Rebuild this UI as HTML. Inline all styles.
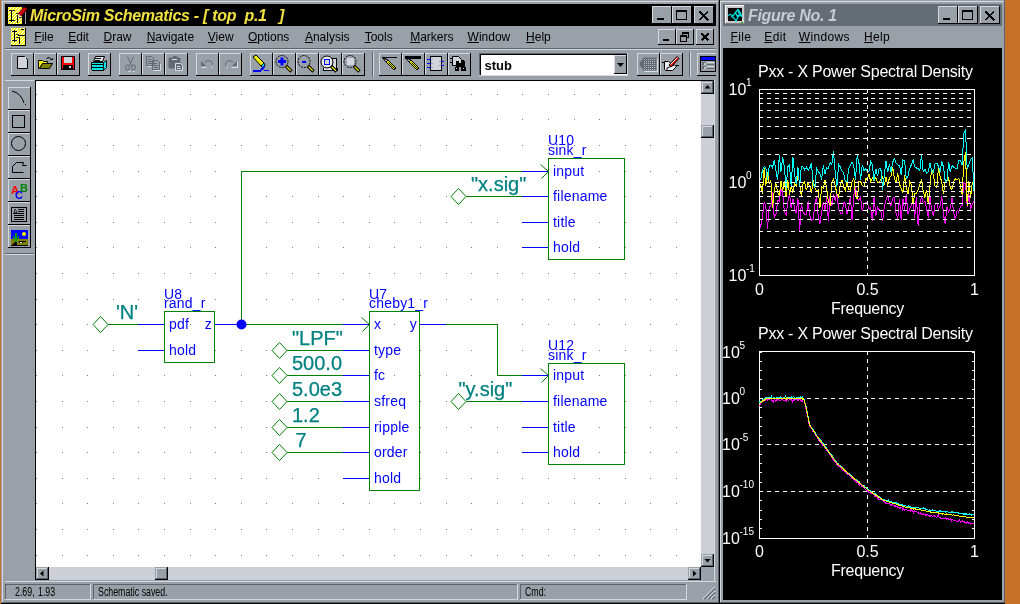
<!DOCTYPE html><html><head><meta charset="utf-8"><style>
html,body{margin:0;padding:0}
body{width:1020px;height:604px;overflow:hidden;position:relative;background:#c5712a;font-family:"Liberation Sans",sans-serif}
.a{position:absolute}
.t{position:absolute;white-space:pre;line-height:1}
svg{position:absolute;overflow:visible}
u{text-decoration-thickness:1px}
</style></head><body><div style="position:absolute;left:0;top:0;width:1020px;height:604px;will-change:transform">

<div class="a" style="left:719px;top:0px;width:286px;height:604px;background:#9aa0a8;"></div>
<div class="a" style="left:720px;top:1px;width:284px;height:1px;background:#d6d8e0;"></div>
<div class="a" style="left:720px;top:1px;width:1px;height:603px;background:#d6d8e0;"></div>
<div class="a" style="left:1004px;top:0px;width:1px;height:604px;background:#5c6270;"></div>
<div class="a" style="left:720px;top:602px;width:285px;height:1px;background:#5c6270;"></div>
<div class="a" style="left:719px;top:603px;width:286px;height:1px;background:#000;"></div>
<div class="a" style="left:723px;top:4px;width:279px;height:22px;background:#646c76;"></div>
<div class="a" style="left:725px;top:5px;width:20px;height:19px;background:#c8c8c8;"></div>
<div class="a" style="left:725px;top:5px;width:20px;height:1px;background:#fff;"></div>
<div class="a" style="left:725px;top:5px;width:1px;height:19px;background:#fff;"></div>
<div class="a" style="left:725px;top:23px;width:20px;height:1px;background:#808080;"></div>
<div class="a" style="left:744px;top:5px;width:1px;height:19px;background:#808080;"></div>
<div class="a" style="left:726px;top:20px;width:18px;height:1px;background:#f0f0f0;"></div>
<div class="a" style="left:728px;top:8px;width:14px;height:13px;background:#000;"></div>
<svg style="left:725px;top:5px;" width="20" height="19" viewBox="0 0 20 19"><path d="M3,10.5 L5.5,9.5 L8,11 L10.5,7.5 L13,4.5 L15.5,8 L17,12 M6,11.5 L9,13 L11,16 L13,12 L14.5,10 L17,11.5 M10.5,7.5 L12,11 L14.5,10 L13,4.5" fill="none" stroke="#00e0e0" stroke-width="1.3" /><rect x="16" y="17" width="2" height="1" fill="#00c000"/></svg>
<div class="t" style="left:748px;top:7.66px;font-size:16px;color:#c8ccd2;font-weight:bold;font-style:italic;letter-spacing:-0.3px">Figure No. 1</div>
<div class="a" style="left:938px;top:6px;width:20px;height:18px;background:#9aa0a8;"></div>
<div class="a" style="left:938px;top:6px;width:20px;height:1px;background:#d6d8e0;"></div>
<div class="a" style="left:938px;top:6px;width:1px;height:18px;background:#d6d8e0;"></div>
<div class="a" style="left:938px;top:23px;width:20px;height:1px;background:#000;"></div>
<div class="a" style="left:957px;top:6px;width:1px;height:18px;background:#000;"></div>
<svg style="left:938px;top:6px;shape-rendering:crispEdges" width="20" height="18" viewBox="0 0 20 18"><rect x="5" y="12" width="7" height="2" fill="#000"/></svg>
<div class="a" style="left:958px;top:6px;width:20px;height:18px;background:#9aa0a8;"></div>
<div class="a" style="left:958px;top:6px;width:20px;height:1px;background:#d6d8e0;"></div>
<div class="a" style="left:958px;top:6px;width:1px;height:18px;background:#d6d8e0;"></div>
<div class="a" style="left:958px;top:23px;width:20px;height:1px;background:#000;"></div>
<div class="a" style="left:977px;top:6px;width:1px;height:18px;background:#000;"></div>
<svg style="left:958px;top:6px;shape-rendering:crispEdges" width="20" height="18" viewBox="0 0 20 18"><rect x="4" y="4" width="11" height="10" fill="#000"/><rect x="5" y="6" width="9" height="7" fill="#9aa0a8"/></svg>
<div class="a" style="left:980px;top:6px;width:20px;height:18px;background:#9aa0a8;"></div>
<div class="a" style="left:980px;top:6px;width:20px;height:1px;background:#d6d8e0;"></div>
<div class="a" style="left:980px;top:6px;width:1px;height:18px;background:#d6d8e0;"></div>
<div class="a" style="left:980px;top:23px;width:20px;height:1px;background:#000;"></div>
<div class="a" style="left:999px;top:6px;width:1px;height:18px;background:#000;"></div>
<svg style="left:980px;top:6px;shape-rendering:crispEdges" width="20" height="18" viewBox="0 0 20 18"><path d="M5.3,5.3 L14.2,14.2 M14.2,5.3 L5.3,14.2" fill="none" stroke="#000" stroke-width="1.7" /></svg>
<div class="t" style="left:730.5px;top:30.84px;font-size:12px;color:#000;font-weight:normal;font-style:normal;text-underline-offset:1px;letter-spacing:0.35px"><u>F</u>ile</div>
<div class="t" style="left:764.3px;top:30.84px;font-size:12px;color:#000;font-weight:normal;font-style:normal;text-underline-offset:1px;letter-spacing:0.35px"><u>E</u>dit</div>
<div class="t" style="left:798.8px;top:30.84px;font-size:12px;color:#000;font-weight:normal;font-style:normal;text-underline-offset:1px;letter-spacing:0.35px"><u>W</u>indows</div>
<div class="t" style="left:864px;top:30.84px;font-size:12px;color:#000;font-weight:normal;font-style:normal;text-underline-offset:1px;letter-spacing:0.35px"><u>H</u>elp</div>
<div class="a" style="left:723px;top:48px;width:279px;height:552px;background:#000;"></div>
<svg style="left:0;top:0" width="1020" height="604" viewBox="0 0 1020 604"><g font-family="Liberation Sans"><clipPath id="pc"><rect x="723" y="48" width="279" height="552"/></clipPath><g clip-path="url(#pc)" shape-rendering="crispEdges"><polyline points="759.0,229.7 760.7,225.9 762.4,218.1 764.1,202.0 765.8,206.4 767.5,228.6 769.2,207.0 770.9,205.6 772.5,191.8 774.2,217.3 775.9,215.0 777.6,200.6 779.3,201.0 781.0,188.9 782.7,193.4 784.4,212.3 786.1,215.1 787.8,201.7 789.5,194.3 791.2,208.1 792.9,198.7 794.6,208.6 796.2,213.4 797.9,197.6 799.6,231.5 801.3,203.4 803.0,212.0 804.7,214.5 806.4,214.7 808.1,201.3 809.8,215.4 811.5,220.6 813.2,219.2 814.9,203.5 816.6,196.5 818.3,217.5 819.9,223.7 821.6,212.3 823.3,201.9 825.0,209.6 826.7,196.6 828.4,221.4 830.1,195.2 831.8,206.2 833.5,194.3 835.2,200.2 836.9,193.1 838.6,209.0 840.3,213.0 842.0,213.7 843.6,202.7 845.3,203.3 847.0,213.8 848.7,207.9 850.4,196.9 852.1,220.1 853.8,195.4 855.5,186.8 857.2,198.5 858.9,200.4 860.6,197.1 862.3,211.4 864.0,204.2 865.7,202.3 867.3,202.0 869.0,208.9 870.7,207.1 872.4,221.3 874.1,196.9 875.8,216.3 877.5,207.3 879.2,209.9 880.9,211.3 882.6,221.3 884.3,206.5 886.0,199.9 887.7,195.5 889.4,202.9 891.0,205.6 892.7,198.3 894.4,197.3 896.1,213.8 897.8,218.5 899.5,198.6 901.2,220.3 902.9,198.7 904.6,209.7 906.3,194.5 908.0,214.1 909.7,208.5 911.4,204.8 913.1,201.9 914.7,218.2 916.4,196.6 918.1,226.0 919.8,205.0 921.5,196.3 923.2,202.8 924.9,200.9 926.6,208.8 928.3,217.8 930.0,197.2 931.7,210.3 933.4,215.7 935.1,204.4 936.8,203.2 938.4,209.7 940.1,205.8 941.8,196.5 943.5,214.6 945.2,224.4 946.9,206.8 948.6,211.6 950.3,208.6 952.0,197.6 953.7,212.7 955.4,219.1 957.1,210.2 958.8,212.2 960.5,206.1 962.1,205.5 963.8,182.8 965.5,183.4 967.2,207.0 968.9,193.9 970.6,209.5 972.3,203.8 974.0,201.4" fill="none" stroke="#ff00ff" stroke-width="1"/>
<polyline points="759.0,193.3 760.7,184.5 762.4,193.7 764.1,168.3 765.8,186.3 767.5,171.7 769.2,183.4 770.9,180.7 772.5,208.1 774.2,190.9 775.9,183.3 777.6,191.9 779.3,196.1 781.0,181.5 782.7,190.8 784.4,180.6 786.1,196.5 787.8,180.1 789.5,194.5 791.2,186.2 792.9,192.8 794.6,183.2 796.2,186.1 797.9,176.2 799.6,182.4 801.3,195.9 803.0,183.7 804.7,182.0 806.4,190.4 808.1,182.6 809.8,186.6 811.5,193.3 813.2,179.6 814.9,188.0 816.6,191.4 818.3,189.8 819.9,208.4 821.6,186.6 823.3,188.2 825.0,180.1 826.7,187.8 828.4,202.5 830.1,204.7 831.8,182.9 833.5,179.0 835.2,185.7 836.9,193.5 838.6,196.8 840.3,184.8 842.0,180.1 843.6,186.4 845.3,190.8 847.0,181.0 848.7,189.9 850.4,190.1 852.1,181.9 853.8,177.7 855.5,194.2 857.2,199.4 858.9,181.8 860.6,181.5 862.3,185.4 864.0,187.1 865.7,178.4 867.3,179.7 869.0,174.0 870.7,181.5 872.4,177.9 874.1,181.0 875.8,177.9 877.5,182.1 879.2,182.5 880.9,179.6 882.6,176.6 884.3,184.8 886.0,177.3 887.7,185.8 889.4,177.7 891.0,176.3 892.7,166.6 894.4,179.1 896.1,182.3 897.8,173.1 899.5,184.4 901.2,188.3 902.9,193.0 904.6,175.0 906.3,187.3 908.0,194.0 909.7,181.5 911.4,184.9 913.1,204.4 914.7,193.1 916.4,193.5 918.1,190.1 919.8,184.6 921.5,179.0 923.2,191.3 924.9,197.8 926.6,189.6 928.3,204.3 930.0,185.0 931.7,168.7 933.4,175.0 935.1,186.6 936.8,187.6 938.4,168.0 940.1,176.6 941.8,182.1 943.5,194.1 945.2,180.3 946.9,180.6 948.6,178.1 950.3,187.9 952.0,189.3 953.7,181.9 955.4,178.8 957.1,180.1 958.8,178.1 960.5,185.9 962.1,194.8 963.8,162.2 965.5,152.0 967.2,206.3 968.9,180.7 970.6,198.0 972.3,182.6 974.0,186.7" fill="none" stroke="#ffff00" stroke-width="1"/>
<polyline points="759.0,179.0 760.7,179.5 762.4,170.5 764.1,166.6 765.8,167.8 767.5,179.9 769.2,166.3 770.9,165.2 772.5,168.1 774.2,159.6 775.9,170.9 777.6,180.1 779.3,155.4 781.0,171.6 782.7,157.4 784.4,167.0 786.1,188.5 787.8,166.7 789.5,165.1 791.2,186.5 792.9,156.8 794.6,174.4 796.2,184.0 797.9,166.8 799.6,187.0 801.3,166.2 803.0,166.7 804.7,169.8 806.4,167.2 808.1,170.5 809.8,168.2 811.5,163.1 813.2,184.6 814.9,187.9 816.6,168.2 818.3,172.0 819.9,173.2 821.6,179.7 823.3,165.1 825.0,173.8 826.7,167.8 828.4,168.3 830.1,162.8 831.8,164.6 833.5,151.3 835.2,171.8 836.9,186.7 838.6,163.9 840.3,167.0 842.0,171.2 843.6,172.2 845.3,182.0 847.0,181.9 848.7,168.4 850.4,165.6 852.1,162.2 853.8,165.9 855.5,179.6 857.2,155.2 858.9,162.4 860.6,180.0 862.3,164.8 864.0,170.8 865.7,168.5 867.3,171.2 869.0,171.5 870.7,161.5 872.4,165.1 874.1,181.2 875.8,168.6 877.5,176.2 879.2,168.2 880.9,169.1 882.6,189.6 884.3,175.6 886.0,160.8 887.7,172.2 889.4,163.9 891.0,171.7 892.7,162.1 894.4,158.8 896.1,163.0 897.8,164.9 899.5,165.3 901.2,174.6 902.9,159.8 904.6,160.9 906.3,178.6 908.0,175.7 909.7,168.6 911.4,164.6 913.1,159.8 914.7,167.0 916.4,168.0 918.1,168.2 919.8,170.8 921.5,154.2 923.2,171.9 924.9,169.2 926.6,173.5 928.3,171.7 930.0,162.6 931.7,172.0 933.4,172.7 935.1,163.2 936.8,163.0 938.4,166.3 940.1,171.5 941.8,161.3 943.5,167.2 945.2,181.0 946.9,182.3 948.6,162.0 950.3,172.2 952.0,165.6 953.7,167.4 955.4,168.3 957.1,168.6 958.8,160.5 960.5,160.1 962.1,165.3 963.8,133.2 965.5,130.1 967.2,168.8 968.9,164.4 970.6,159.5 972.3,158.0 974.0,191.3" fill="none" stroke="#00ffff" stroke-width="1"/>
<rect x="759" y="154" width="4" height="1" fill="#ffffff"/>
<rect x="767" y="154" width="4" height="1" fill="#ffffff"/>
<rect x="775" y="154" width="4" height="1" fill="#ffffff"/>
<rect x="783" y="154" width="4" height="1" fill="#ffffff"/>
<rect x="791" y="154" width="4" height="1" fill="#ffffff"/>
<rect x="799" y="154" width="4" height="1" fill="#ffffff"/>
<rect x="807" y="154" width="4" height="1" fill="#ffffff"/>
<rect x="815" y="154" width="4" height="1" fill="#ffffff"/>
<rect x="823" y="154" width="4" height="1" fill="#ffffff"/>
<rect x="831" y="154" width="4" height="1" fill="#ffffff"/>
<rect x="839" y="154" width="4" height="1" fill="#ffffff"/>
<rect x="847" y="154" width="4" height="1" fill="#ffffff"/>
<rect x="855" y="154" width="4" height="1" fill="#ffffff"/>
<rect x="863" y="154" width="4" height="1" fill="#ffffff"/>
<rect x="871" y="154" width="4" height="1" fill="#ffffff"/>
<rect x="879" y="154" width="4" height="1" fill="#ffffff"/>
<rect x="887" y="154" width="4" height="1" fill="#ffffff"/>
<rect x="895" y="154" width="4" height="1" fill="#ffffff"/>
<rect x="903" y="154" width="4" height="1" fill="#ffffff"/>
<rect x="911" y="154" width="4" height="1" fill="#ffffff"/>
<rect x="919" y="154" width="4" height="1" fill="#ffffff"/>
<rect x="927" y="154" width="4" height="1" fill="#ffffff"/>
<rect x="935" y="154" width="4" height="1" fill="#ffffff"/>
<rect x="943" y="154" width="4" height="1" fill="#ffffff"/>
<rect x="951" y="154" width="4" height="1" fill="#ffffff"/>
<rect x="959" y="154" width="4" height="1" fill="#ffffff"/>
<rect x="967" y="154" width="4" height="1" fill="#ffffff"/>
<rect x="759" y="138" width="4" height="1" fill="#ffffff"/>
<rect x="767" y="138" width="4" height="1" fill="#ffffff"/>
<rect x="775" y="138" width="4" height="1" fill="#ffffff"/>
<rect x="783" y="138" width="4" height="1" fill="#ffffff"/>
<rect x="791" y="138" width="4" height="1" fill="#ffffff"/>
<rect x="799" y="138" width="4" height="1" fill="#ffffff"/>
<rect x="807" y="138" width="4" height="1" fill="#ffffff"/>
<rect x="815" y="138" width="4" height="1" fill="#ffffff"/>
<rect x="823" y="138" width="4" height="1" fill="#ffffff"/>
<rect x="831" y="138" width="4" height="1" fill="#ffffff"/>
<rect x="839" y="138" width="4" height="1" fill="#ffffff"/>
<rect x="847" y="138" width="4" height="1" fill="#ffffff"/>
<rect x="855" y="138" width="4" height="1" fill="#ffffff"/>
<rect x="863" y="138" width="4" height="1" fill="#ffffff"/>
<rect x="871" y="138" width="4" height="1" fill="#ffffff"/>
<rect x="879" y="138" width="4" height="1" fill="#ffffff"/>
<rect x="887" y="138" width="4" height="1" fill="#ffffff"/>
<rect x="895" y="138" width="4" height="1" fill="#ffffff"/>
<rect x="903" y="138" width="4" height="1" fill="#ffffff"/>
<rect x="911" y="138" width="4" height="1" fill="#ffffff"/>
<rect x="919" y="138" width="4" height="1" fill="#ffffff"/>
<rect x="927" y="138" width="4" height="1" fill="#ffffff"/>
<rect x="935" y="138" width="4" height="1" fill="#ffffff"/>
<rect x="943" y="138" width="4" height="1" fill="#ffffff"/>
<rect x="951" y="138" width="4" height="1" fill="#ffffff"/>
<rect x="959" y="138" width="4" height="1" fill="#ffffff"/>
<rect x="967" y="138" width="4" height="1" fill="#ffffff"/>
<rect x="759" y="126" width="4" height="1" fill="#ffffff"/>
<rect x="767" y="126" width="4" height="1" fill="#ffffff"/>
<rect x="775" y="126" width="4" height="1" fill="#ffffff"/>
<rect x="783" y="126" width="4" height="1" fill="#ffffff"/>
<rect x="791" y="126" width="4" height="1" fill="#ffffff"/>
<rect x="799" y="126" width="4" height="1" fill="#ffffff"/>
<rect x="807" y="126" width="4" height="1" fill="#ffffff"/>
<rect x="815" y="126" width="4" height="1" fill="#ffffff"/>
<rect x="823" y="126" width="4" height="1" fill="#ffffff"/>
<rect x="831" y="126" width="4" height="1" fill="#ffffff"/>
<rect x="839" y="126" width="4" height="1" fill="#ffffff"/>
<rect x="847" y="126" width="4" height="1" fill="#ffffff"/>
<rect x="855" y="126" width="4" height="1" fill="#ffffff"/>
<rect x="863" y="126" width="4" height="1" fill="#ffffff"/>
<rect x="871" y="126" width="4" height="1" fill="#ffffff"/>
<rect x="879" y="126" width="4" height="1" fill="#ffffff"/>
<rect x="887" y="126" width="4" height="1" fill="#ffffff"/>
<rect x="895" y="126" width="4" height="1" fill="#ffffff"/>
<rect x="903" y="126" width="4" height="1" fill="#ffffff"/>
<rect x="911" y="126" width="4" height="1" fill="#ffffff"/>
<rect x="919" y="126" width="4" height="1" fill="#ffffff"/>
<rect x="927" y="126" width="4" height="1" fill="#ffffff"/>
<rect x="935" y="126" width="4" height="1" fill="#ffffff"/>
<rect x="943" y="126" width="4" height="1" fill="#ffffff"/>
<rect x="951" y="126" width="4" height="1" fill="#ffffff"/>
<rect x="959" y="126" width="4" height="1" fill="#ffffff"/>
<rect x="967" y="126" width="4" height="1" fill="#ffffff"/>
<rect x="759" y="117" width="4" height="1" fill="#ffffff"/>
<rect x="767" y="117" width="4" height="1" fill="#ffffff"/>
<rect x="775" y="117" width="4" height="1" fill="#ffffff"/>
<rect x="783" y="117" width="4" height="1" fill="#ffffff"/>
<rect x="791" y="117" width="4" height="1" fill="#ffffff"/>
<rect x="799" y="117" width="4" height="1" fill="#ffffff"/>
<rect x="807" y="117" width="4" height="1" fill="#ffffff"/>
<rect x="815" y="117" width="4" height="1" fill="#ffffff"/>
<rect x="823" y="117" width="4" height="1" fill="#ffffff"/>
<rect x="831" y="117" width="4" height="1" fill="#ffffff"/>
<rect x="839" y="117" width="4" height="1" fill="#ffffff"/>
<rect x="847" y="117" width="4" height="1" fill="#ffffff"/>
<rect x="855" y="117" width="4" height="1" fill="#ffffff"/>
<rect x="863" y="117" width="4" height="1" fill="#ffffff"/>
<rect x="871" y="117" width="4" height="1" fill="#ffffff"/>
<rect x="879" y="117" width="4" height="1" fill="#ffffff"/>
<rect x="887" y="117" width="4" height="1" fill="#ffffff"/>
<rect x="895" y="117" width="4" height="1" fill="#ffffff"/>
<rect x="903" y="117" width="4" height="1" fill="#ffffff"/>
<rect x="911" y="117" width="4" height="1" fill="#ffffff"/>
<rect x="919" y="117" width="4" height="1" fill="#ffffff"/>
<rect x="927" y="117" width="4" height="1" fill="#ffffff"/>
<rect x="935" y="117" width="4" height="1" fill="#ffffff"/>
<rect x="943" y="117" width="4" height="1" fill="#ffffff"/>
<rect x="951" y="117" width="4" height="1" fill="#ffffff"/>
<rect x="959" y="117" width="4" height="1" fill="#ffffff"/>
<rect x="967" y="117" width="4" height="1" fill="#ffffff"/>
<rect x="759" y="110" width="4" height="1" fill="#ffffff"/>
<rect x="767" y="110" width="4" height="1" fill="#ffffff"/>
<rect x="775" y="110" width="4" height="1" fill="#ffffff"/>
<rect x="783" y="110" width="4" height="1" fill="#ffffff"/>
<rect x="791" y="110" width="4" height="1" fill="#ffffff"/>
<rect x="799" y="110" width="4" height="1" fill="#ffffff"/>
<rect x="807" y="110" width="4" height="1" fill="#ffffff"/>
<rect x="815" y="110" width="4" height="1" fill="#ffffff"/>
<rect x="823" y="110" width="4" height="1" fill="#ffffff"/>
<rect x="831" y="110" width="4" height="1" fill="#ffffff"/>
<rect x="839" y="110" width="4" height="1" fill="#ffffff"/>
<rect x="847" y="110" width="4" height="1" fill="#ffffff"/>
<rect x="855" y="110" width="4" height="1" fill="#ffffff"/>
<rect x="863" y="110" width="4" height="1" fill="#ffffff"/>
<rect x="871" y="110" width="4" height="1" fill="#ffffff"/>
<rect x="879" y="110" width="4" height="1" fill="#ffffff"/>
<rect x="887" y="110" width="4" height="1" fill="#ffffff"/>
<rect x="895" y="110" width="4" height="1" fill="#ffffff"/>
<rect x="903" y="110" width="4" height="1" fill="#ffffff"/>
<rect x="911" y="110" width="4" height="1" fill="#ffffff"/>
<rect x="919" y="110" width="4" height="1" fill="#ffffff"/>
<rect x="927" y="110" width="4" height="1" fill="#ffffff"/>
<rect x="935" y="110" width="4" height="1" fill="#ffffff"/>
<rect x="943" y="110" width="4" height="1" fill="#ffffff"/>
<rect x="951" y="110" width="4" height="1" fill="#ffffff"/>
<rect x="959" y="110" width="4" height="1" fill="#ffffff"/>
<rect x="967" y="110" width="4" height="1" fill="#ffffff"/>
<rect x="759" y="103" width="4" height="1" fill="#ffffff"/>
<rect x="767" y="103" width="4" height="1" fill="#ffffff"/>
<rect x="775" y="103" width="4" height="1" fill="#ffffff"/>
<rect x="783" y="103" width="4" height="1" fill="#ffffff"/>
<rect x="791" y="103" width="4" height="1" fill="#ffffff"/>
<rect x="799" y="103" width="4" height="1" fill="#ffffff"/>
<rect x="807" y="103" width="4" height="1" fill="#ffffff"/>
<rect x="815" y="103" width="4" height="1" fill="#ffffff"/>
<rect x="823" y="103" width="4" height="1" fill="#ffffff"/>
<rect x="831" y="103" width="4" height="1" fill="#ffffff"/>
<rect x="839" y="103" width="4" height="1" fill="#ffffff"/>
<rect x="847" y="103" width="4" height="1" fill="#ffffff"/>
<rect x="855" y="103" width="4" height="1" fill="#ffffff"/>
<rect x="863" y="103" width="4" height="1" fill="#ffffff"/>
<rect x="871" y="103" width="4" height="1" fill="#ffffff"/>
<rect x="879" y="103" width="4" height="1" fill="#ffffff"/>
<rect x="887" y="103" width="4" height="1" fill="#ffffff"/>
<rect x="895" y="103" width="4" height="1" fill="#ffffff"/>
<rect x="903" y="103" width="4" height="1" fill="#ffffff"/>
<rect x="911" y="103" width="4" height="1" fill="#ffffff"/>
<rect x="919" y="103" width="4" height="1" fill="#ffffff"/>
<rect x="927" y="103" width="4" height="1" fill="#ffffff"/>
<rect x="935" y="103" width="4" height="1" fill="#ffffff"/>
<rect x="943" y="103" width="4" height="1" fill="#ffffff"/>
<rect x="951" y="103" width="4" height="1" fill="#ffffff"/>
<rect x="959" y="103" width="4" height="1" fill="#ffffff"/>
<rect x="967" y="103" width="4" height="1" fill="#ffffff"/>
<rect x="759" y="98" width="4" height="1" fill="#ffffff"/>
<rect x="767" y="98" width="4" height="1" fill="#ffffff"/>
<rect x="775" y="98" width="4" height="1" fill="#ffffff"/>
<rect x="783" y="98" width="4" height="1" fill="#ffffff"/>
<rect x="791" y="98" width="4" height="1" fill="#ffffff"/>
<rect x="799" y="98" width="4" height="1" fill="#ffffff"/>
<rect x="807" y="98" width="4" height="1" fill="#ffffff"/>
<rect x="815" y="98" width="4" height="1" fill="#ffffff"/>
<rect x="823" y="98" width="4" height="1" fill="#ffffff"/>
<rect x="831" y="98" width="4" height="1" fill="#ffffff"/>
<rect x="839" y="98" width="4" height="1" fill="#ffffff"/>
<rect x="847" y="98" width="4" height="1" fill="#ffffff"/>
<rect x="855" y="98" width="4" height="1" fill="#ffffff"/>
<rect x="863" y="98" width="4" height="1" fill="#ffffff"/>
<rect x="871" y="98" width="4" height="1" fill="#ffffff"/>
<rect x="879" y="98" width="4" height="1" fill="#ffffff"/>
<rect x="887" y="98" width="4" height="1" fill="#ffffff"/>
<rect x="895" y="98" width="4" height="1" fill="#ffffff"/>
<rect x="903" y="98" width="4" height="1" fill="#ffffff"/>
<rect x="911" y="98" width="4" height="1" fill="#ffffff"/>
<rect x="919" y="98" width="4" height="1" fill="#ffffff"/>
<rect x="927" y="98" width="4" height="1" fill="#ffffff"/>
<rect x="935" y="98" width="4" height="1" fill="#ffffff"/>
<rect x="943" y="98" width="4" height="1" fill="#ffffff"/>
<rect x="951" y="98" width="4" height="1" fill="#ffffff"/>
<rect x="959" y="98" width="4" height="1" fill="#ffffff"/>
<rect x="967" y="98" width="4" height="1" fill="#ffffff"/>
<rect x="759" y="93" width="4" height="1" fill="#ffffff"/>
<rect x="767" y="93" width="4" height="1" fill="#ffffff"/>
<rect x="775" y="93" width="4" height="1" fill="#ffffff"/>
<rect x="783" y="93" width="4" height="1" fill="#ffffff"/>
<rect x="791" y="93" width="4" height="1" fill="#ffffff"/>
<rect x="799" y="93" width="4" height="1" fill="#ffffff"/>
<rect x="807" y="93" width="4" height="1" fill="#ffffff"/>
<rect x="815" y="93" width="4" height="1" fill="#ffffff"/>
<rect x="823" y="93" width="4" height="1" fill="#ffffff"/>
<rect x="831" y="93" width="4" height="1" fill="#ffffff"/>
<rect x="839" y="93" width="4" height="1" fill="#ffffff"/>
<rect x="847" y="93" width="4" height="1" fill="#ffffff"/>
<rect x="855" y="93" width="4" height="1" fill="#ffffff"/>
<rect x="863" y="93" width="4" height="1" fill="#ffffff"/>
<rect x="871" y="93" width="4" height="1" fill="#ffffff"/>
<rect x="879" y="93" width="4" height="1" fill="#ffffff"/>
<rect x="887" y="93" width="4" height="1" fill="#ffffff"/>
<rect x="895" y="93" width="4" height="1" fill="#ffffff"/>
<rect x="903" y="93" width="4" height="1" fill="#ffffff"/>
<rect x="911" y="93" width="4" height="1" fill="#ffffff"/>
<rect x="919" y="93" width="4" height="1" fill="#ffffff"/>
<rect x="927" y="93" width="4" height="1" fill="#ffffff"/>
<rect x="935" y="93" width="4" height="1" fill="#ffffff"/>
<rect x="943" y="93" width="4" height="1" fill="#ffffff"/>
<rect x="951" y="93" width="4" height="1" fill="#ffffff"/>
<rect x="959" y="93" width="4" height="1" fill="#ffffff"/>
<rect x="967" y="93" width="4" height="1" fill="#ffffff"/>
<rect x="759" y="247" width="4" height="1" fill="#ffffff"/>
<rect x="767" y="247" width="4" height="1" fill="#ffffff"/>
<rect x="775" y="247" width="4" height="1" fill="#ffffff"/>
<rect x="783" y="247" width="4" height="1" fill="#ffffff"/>
<rect x="791" y="247" width="4" height="1" fill="#ffffff"/>
<rect x="799" y="247" width="4" height="1" fill="#ffffff"/>
<rect x="807" y="247" width="4" height="1" fill="#ffffff"/>
<rect x="815" y="247" width="4" height="1" fill="#ffffff"/>
<rect x="823" y="247" width="4" height="1" fill="#ffffff"/>
<rect x="831" y="247" width="4" height="1" fill="#ffffff"/>
<rect x="839" y="247" width="4" height="1" fill="#ffffff"/>
<rect x="847" y="247" width="4" height="1" fill="#ffffff"/>
<rect x="855" y="247" width="4" height="1" fill="#ffffff"/>
<rect x="863" y="247" width="4" height="1" fill="#ffffff"/>
<rect x="871" y="247" width="4" height="1" fill="#ffffff"/>
<rect x="879" y="247" width="4" height="1" fill="#ffffff"/>
<rect x="887" y="247" width="4" height="1" fill="#ffffff"/>
<rect x="895" y="247" width="4" height="1" fill="#ffffff"/>
<rect x="903" y="247" width="4" height="1" fill="#ffffff"/>
<rect x="911" y="247" width="4" height="1" fill="#ffffff"/>
<rect x="919" y="247" width="4" height="1" fill="#ffffff"/>
<rect x="927" y="247" width="4" height="1" fill="#ffffff"/>
<rect x="935" y="247" width="4" height="1" fill="#ffffff"/>
<rect x="943" y="247" width="4" height="1" fill="#ffffff"/>
<rect x="951" y="247" width="4" height="1" fill="#ffffff"/>
<rect x="959" y="247" width="4" height="1" fill="#ffffff"/>
<rect x="967" y="247" width="4" height="1" fill="#ffffff"/>
<rect x="759" y="231" width="4" height="1" fill="#ffffff"/>
<rect x="767" y="231" width="4" height="1" fill="#ffffff"/>
<rect x="775" y="231" width="4" height="1" fill="#ffffff"/>
<rect x="783" y="231" width="4" height="1" fill="#ffffff"/>
<rect x="791" y="231" width="4" height="1" fill="#ffffff"/>
<rect x="799" y="231" width="4" height="1" fill="#ffffff"/>
<rect x="807" y="231" width="4" height="1" fill="#ffffff"/>
<rect x="815" y="231" width="4" height="1" fill="#ffffff"/>
<rect x="823" y="231" width="4" height="1" fill="#ffffff"/>
<rect x="831" y="231" width="4" height="1" fill="#ffffff"/>
<rect x="839" y="231" width="4" height="1" fill="#ffffff"/>
<rect x="847" y="231" width="4" height="1" fill="#ffffff"/>
<rect x="855" y="231" width="4" height="1" fill="#ffffff"/>
<rect x="863" y="231" width="4" height="1" fill="#ffffff"/>
<rect x="871" y="231" width="4" height="1" fill="#ffffff"/>
<rect x="879" y="231" width="4" height="1" fill="#ffffff"/>
<rect x="887" y="231" width="4" height="1" fill="#ffffff"/>
<rect x="895" y="231" width="4" height="1" fill="#ffffff"/>
<rect x="903" y="231" width="4" height="1" fill="#ffffff"/>
<rect x="911" y="231" width="4" height="1" fill="#ffffff"/>
<rect x="919" y="231" width="4" height="1" fill="#ffffff"/>
<rect x="927" y="231" width="4" height="1" fill="#ffffff"/>
<rect x="935" y="231" width="4" height="1" fill="#ffffff"/>
<rect x="943" y="231" width="4" height="1" fill="#ffffff"/>
<rect x="951" y="231" width="4" height="1" fill="#ffffff"/>
<rect x="959" y="231" width="4" height="1" fill="#ffffff"/>
<rect x="967" y="231" width="4" height="1" fill="#ffffff"/>
<rect x="759" y="219" width="4" height="1" fill="#ffffff"/>
<rect x="767" y="219" width="4" height="1" fill="#ffffff"/>
<rect x="775" y="219" width="4" height="1" fill="#ffffff"/>
<rect x="783" y="219" width="4" height="1" fill="#ffffff"/>
<rect x="791" y="219" width="4" height="1" fill="#ffffff"/>
<rect x="799" y="219" width="4" height="1" fill="#ffffff"/>
<rect x="807" y="219" width="4" height="1" fill="#ffffff"/>
<rect x="815" y="219" width="4" height="1" fill="#ffffff"/>
<rect x="823" y="219" width="4" height="1" fill="#ffffff"/>
<rect x="831" y="219" width="4" height="1" fill="#ffffff"/>
<rect x="839" y="219" width="4" height="1" fill="#ffffff"/>
<rect x="847" y="219" width="4" height="1" fill="#ffffff"/>
<rect x="855" y="219" width="4" height="1" fill="#ffffff"/>
<rect x="863" y="219" width="4" height="1" fill="#ffffff"/>
<rect x="871" y="219" width="4" height="1" fill="#ffffff"/>
<rect x="879" y="219" width="4" height="1" fill="#ffffff"/>
<rect x="887" y="219" width="4" height="1" fill="#ffffff"/>
<rect x="895" y="219" width="4" height="1" fill="#ffffff"/>
<rect x="903" y="219" width="4" height="1" fill="#ffffff"/>
<rect x="911" y="219" width="4" height="1" fill="#ffffff"/>
<rect x="919" y="219" width="4" height="1" fill="#ffffff"/>
<rect x="927" y="219" width="4" height="1" fill="#ffffff"/>
<rect x="935" y="219" width="4" height="1" fill="#ffffff"/>
<rect x="943" y="219" width="4" height="1" fill="#ffffff"/>
<rect x="951" y="219" width="4" height="1" fill="#ffffff"/>
<rect x="959" y="219" width="4" height="1" fill="#ffffff"/>
<rect x="967" y="219" width="4" height="1" fill="#ffffff"/>
<rect x="759" y="210" width="4" height="1" fill="#ffffff"/>
<rect x="767" y="210" width="4" height="1" fill="#ffffff"/>
<rect x="775" y="210" width="4" height="1" fill="#ffffff"/>
<rect x="783" y="210" width="4" height="1" fill="#ffffff"/>
<rect x="791" y="210" width="4" height="1" fill="#ffffff"/>
<rect x="799" y="210" width="4" height="1" fill="#ffffff"/>
<rect x="807" y="210" width="4" height="1" fill="#ffffff"/>
<rect x="815" y="210" width="4" height="1" fill="#ffffff"/>
<rect x="823" y="210" width="4" height="1" fill="#ffffff"/>
<rect x="831" y="210" width="4" height="1" fill="#ffffff"/>
<rect x="839" y="210" width="4" height="1" fill="#ffffff"/>
<rect x="847" y="210" width="4" height="1" fill="#ffffff"/>
<rect x="855" y="210" width="4" height="1" fill="#ffffff"/>
<rect x="863" y="210" width="4" height="1" fill="#ffffff"/>
<rect x="871" y="210" width="4" height="1" fill="#ffffff"/>
<rect x="879" y="210" width="4" height="1" fill="#ffffff"/>
<rect x="887" y="210" width="4" height="1" fill="#ffffff"/>
<rect x="895" y="210" width="4" height="1" fill="#ffffff"/>
<rect x="903" y="210" width="4" height="1" fill="#ffffff"/>
<rect x="911" y="210" width="4" height="1" fill="#ffffff"/>
<rect x="919" y="210" width="4" height="1" fill="#ffffff"/>
<rect x="927" y="210" width="4" height="1" fill="#ffffff"/>
<rect x="935" y="210" width="4" height="1" fill="#ffffff"/>
<rect x="943" y="210" width="4" height="1" fill="#ffffff"/>
<rect x="951" y="210" width="4" height="1" fill="#ffffff"/>
<rect x="959" y="210" width="4" height="1" fill="#ffffff"/>
<rect x="967" y="210" width="4" height="1" fill="#ffffff"/>
<rect x="759" y="203" width="4" height="1" fill="#ffffff"/>
<rect x="767" y="203" width="4" height="1" fill="#ffffff"/>
<rect x="775" y="203" width="4" height="1" fill="#ffffff"/>
<rect x="783" y="203" width="4" height="1" fill="#ffffff"/>
<rect x="791" y="203" width="4" height="1" fill="#ffffff"/>
<rect x="799" y="203" width="4" height="1" fill="#ffffff"/>
<rect x="807" y="203" width="4" height="1" fill="#ffffff"/>
<rect x="815" y="203" width="4" height="1" fill="#ffffff"/>
<rect x="823" y="203" width="4" height="1" fill="#ffffff"/>
<rect x="831" y="203" width="4" height="1" fill="#ffffff"/>
<rect x="839" y="203" width="4" height="1" fill="#ffffff"/>
<rect x="847" y="203" width="4" height="1" fill="#ffffff"/>
<rect x="855" y="203" width="4" height="1" fill="#ffffff"/>
<rect x="863" y="203" width="4" height="1" fill="#ffffff"/>
<rect x="871" y="203" width="4" height="1" fill="#ffffff"/>
<rect x="879" y="203" width="4" height="1" fill="#ffffff"/>
<rect x="887" y="203" width="4" height="1" fill="#ffffff"/>
<rect x="895" y="203" width="4" height="1" fill="#ffffff"/>
<rect x="903" y="203" width="4" height="1" fill="#ffffff"/>
<rect x="911" y="203" width="4" height="1" fill="#ffffff"/>
<rect x="919" y="203" width="4" height="1" fill="#ffffff"/>
<rect x="927" y="203" width="4" height="1" fill="#ffffff"/>
<rect x="935" y="203" width="4" height="1" fill="#ffffff"/>
<rect x="943" y="203" width="4" height="1" fill="#ffffff"/>
<rect x="951" y="203" width="4" height="1" fill="#ffffff"/>
<rect x="959" y="203" width="4" height="1" fill="#ffffff"/>
<rect x="967" y="203" width="4" height="1" fill="#ffffff"/>
<rect x="759" y="196" width="4" height="1" fill="#ffffff"/>
<rect x="767" y="196" width="4" height="1" fill="#ffffff"/>
<rect x="775" y="196" width="4" height="1" fill="#ffffff"/>
<rect x="783" y="196" width="4" height="1" fill="#ffffff"/>
<rect x="791" y="196" width="4" height="1" fill="#ffffff"/>
<rect x="799" y="196" width="4" height="1" fill="#ffffff"/>
<rect x="807" y="196" width="4" height="1" fill="#ffffff"/>
<rect x="815" y="196" width="4" height="1" fill="#ffffff"/>
<rect x="823" y="196" width="4" height="1" fill="#ffffff"/>
<rect x="831" y="196" width="4" height="1" fill="#ffffff"/>
<rect x="839" y="196" width="4" height="1" fill="#ffffff"/>
<rect x="847" y="196" width="4" height="1" fill="#ffffff"/>
<rect x="855" y="196" width="4" height="1" fill="#ffffff"/>
<rect x="863" y="196" width="4" height="1" fill="#ffffff"/>
<rect x="871" y="196" width="4" height="1" fill="#ffffff"/>
<rect x="879" y="196" width="4" height="1" fill="#ffffff"/>
<rect x="887" y="196" width="4" height="1" fill="#ffffff"/>
<rect x="895" y="196" width="4" height="1" fill="#ffffff"/>
<rect x="903" y="196" width="4" height="1" fill="#ffffff"/>
<rect x="911" y="196" width="4" height="1" fill="#ffffff"/>
<rect x="919" y="196" width="4" height="1" fill="#ffffff"/>
<rect x="927" y="196" width="4" height="1" fill="#ffffff"/>
<rect x="935" y="196" width="4" height="1" fill="#ffffff"/>
<rect x="943" y="196" width="4" height="1" fill="#ffffff"/>
<rect x="951" y="196" width="4" height="1" fill="#ffffff"/>
<rect x="959" y="196" width="4" height="1" fill="#ffffff"/>
<rect x="967" y="196" width="4" height="1" fill="#ffffff"/>
<rect x="759" y="191" width="4" height="1" fill="#ffffff"/>
<rect x="767" y="191" width="4" height="1" fill="#ffffff"/>
<rect x="775" y="191" width="4" height="1" fill="#ffffff"/>
<rect x="783" y="191" width="4" height="1" fill="#ffffff"/>
<rect x="791" y="191" width="4" height="1" fill="#ffffff"/>
<rect x="799" y="191" width="4" height="1" fill="#ffffff"/>
<rect x="807" y="191" width="4" height="1" fill="#ffffff"/>
<rect x="815" y="191" width="4" height="1" fill="#ffffff"/>
<rect x="823" y="191" width="4" height="1" fill="#ffffff"/>
<rect x="831" y="191" width="4" height="1" fill="#ffffff"/>
<rect x="839" y="191" width="4" height="1" fill="#ffffff"/>
<rect x="847" y="191" width="4" height="1" fill="#ffffff"/>
<rect x="855" y="191" width="4" height="1" fill="#ffffff"/>
<rect x="863" y="191" width="4" height="1" fill="#ffffff"/>
<rect x="871" y="191" width="4" height="1" fill="#ffffff"/>
<rect x="879" y="191" width="4" height="1" fill="#ffffff"/>
<rect x="887" y="191" width="4" height="1" fill="#ffffff"/>
<rect x="895" y="191" width="4" height="1" fill="#ffffff"/>
<rect x="903" y="191" width="4" height="1" fill="#ffffff"/>
<rect x="911" y="191" width="4" height="1" fill="#ffffff"/>
<rect x="919" y="191" width="4" height="1" fill="#ffffff"/>
<rect x="927" y="191" width="4" height="1" fill="#ffffff"/>
<rect x="935" y="191" width="4" height="1" fill="#ffffff"/>
<rect x="943" y="191" width="4" height="1" fill="#ffffff"/>
<rect x="951" y="191" width="4" height="1" fill="#ffffff"/>
<rect x="959" y="191" width="4" height="1" fill="#ffffff"/>
<rect x="967" y="191" width="4" height="1" fill="#ffffff"/>
<rect x="759" y="186" width="4" height="1" fill="#ffffff"/>
<rect x="767" y="186" width="4" height="1" fill="#ffffff"/>
<rect x="775" y="186" width="4" height="1" fill="#ffffff"/>
<rect x="783" y="186" width="4" height="1" fill="#ffffff"/>
<rect x="791" y="186" width="4" height="1" fill="#ffffff"/>
<rect x="799" y="186" width="4" height="1" fill="#ffffff"/>
<rect x="807" y="186" width="4" height="1" fill="#ffffff"/>
<rect x="815" y="186" width="4" height="1" fill="#ffffff"/>
<rect x="823" y="186" width="4" height="1" fill="#ffffff"/>
<rect x="831" y="186" width="4" height="1" fill="#ffffff"/>
<rect x="839" y="186" width="4" height="1" fill="#ffffff"/>
<rect x="847" y="186" width="4" height="1" fill="#ffffff"/>
<rect x="855" y="186" width="4" height="1" fill="#ffffff"/>
<rect x="863" y="186" width="4" height="1" fill="#ffffff"/>
<rect x="871" y="186" width="4" height="1" fill="#ffffff"/>
<rect x="879" y="186" width="4" height="1" fill="#ffffff"/>
<rect x="887" y="186" width="4" height="1" fill="#ffffff"/>
<rect x="895" y="186" width="4" height="1" fill="#ffffff"/>
<rect x="903" y="186" width="4" height="1" fill="#ffffff"/>
<rect x="911" y="186" width="4" height="1" fill="#ffffff"/>
<rect x="919" y="186" width="4" height="1" fill="#ffffff"/>
<rect x="927" y="186" width="4" height="1" fill="#ffffff"/>
<rect x="935" y="186" width="4" height="1" fill="#ffffff"/>
<rect x="943" y="186" width="4" height="1" fill="#ffffff"/>
<rect x="951" y="186" width="4" height="1" fill="#ffffff"/>
<rect x="959" y="186" width="4" height="1" fill="#ffffff"/>
<rect x="967" y="186" width="4" height="1" fill="#ffffff"/>
<rect x="759" y="182" width="4" height="1" fill="#ffffff"/>
<rect x="767" y="182" width="4" height="1" fill="#ffffff"/>
<rect x="775" y="182" width="4" height="1" fill="#ffffff"/>
<rect x="783" y="182" width="4" height="1" fill="#ffffff"/>
<rect x="791" y="182" width="4" height="1" fill="#ffffff"/>
<rect x="799" y="182" width="4" height="1" fill="#ffffff"/>
<rect x="807" y="182" width="4" height="1" fill="#ffffff"/>
<rect x="815" y="182" width="4" height="1" fill="#ffffff"/>
<rect x="823" y="182" width="4" height="1" fill="#ffffff"/>
<rect x="831" y="182" width="4" height="1" fill="#ffffff"/>
<rect x="839" y="182" width="4" height="1" fill="#ffffff"/>
<rect x="847" y="182" width="4" height="1" fill="#ffffff"/>
<rect x="855" y="182" width="4" height="1" fill="#ffffff"/>
<rect x="863" y="182" width="4" height="1" fill="#ffffff"/>
<rect x="871" y="182" width="4" height="1" fill="#ffffff"/>
<rect x="879" y="182" width="4" height="1" fill="#ffffff"/>
<rect x="887" y="182" width="4" height="1" fill="#ffffff"/>
<rect x="895" y="182" width="4" height="1" fill="#ffffff"/>
<rect x="903" y="182" width="4" height="1" fill="#ffffff"/>
<rect x="911" y="182" width="4" height="1" fill="#ffffff"/>
<rect x="919" y="182" width="4" height="1" fill="#ffffff"/>
<rect x="927" y="182" width="4" height="1" fill="#ffffff"/>
<rect x="935" y="182" width="4" height="1" fill="#ffffff"/>
<rect x="943" y="182" width="4" height="1" fill="#ffffff"/>
<rect x="951" y="182" width="4" height="1" fill="#ffffff"/>
<rect x="959" y="182" width="4" height="1" fill="#ffffff"/>
<rect x="967" y="182" width="4" height="1" fill="#ffffff"/>
<rect x="867" y="89" width="1" height="4" fill="#ffffff"/>
<rect x="867" y="97" width="1" height="4" fill="#ffffff"/>
<rect x="867" y="105" width="1" height="4" fill="#ffffff"/>
<rect x="867" y="113" width="1" height="4" fill="#ffffff"/>
<rect x="867" y="121" width="1" height="4" fill="#ffffff"/>
<rect x="867" y="129" width="1" height="4" fill="#ffffff"/>
<rect x="867" y="137" width="1" height="4" fill="#ffffff"/>
<rect x="867" y="145" width="1" height="4" fill="#ffffff"/>
<rect x="867" y="153" width="1" height="4" fill="#ffffff"/>
<rect x="867" y="161" width="1" height="4" fill="#ffffff"/>
<rect x="867" y="169" width="1" height="4" fill="#ffffff"/>
<rect x="867" y="177" width="1" height="4" fill="#ffffff"/>
<rect x="867" y="185" width="1" height="4" fill="#ffffff"/>
<rect x="867" y="193" width="1" height="4" fill="#ffffff"/>
<rect x="867" y="201" width="1" height="4" fill="#ffffff"/>
<rect x="867" y="209" width="1" height="4" fill="#ffffff"/>
<rect x="867" y="217" width="1" height="4" fill="#ffffff"/>
<rect x="867" y="225" width="1" height="4" fill="#ffffff"/>
<rect x="867" y="233" width="1" height="4" fill="#ffffff"/>
<rect x="867" y="241" width="1" height="4" fill="#ffffff"/>
<rect x="867" y="249" width="1" height="4" fill="#ffffff"/>
<rect x="867" y="257" width="1" height="4" fill="#ffffff"/>
<rect x="867" y="265" width="1" height="4" fill="#ffffff"/>
<rect x="867" y="273" width="1" height="3" fill="#ffffff"/>
<rect x="759" y="89" width="216" height="1" fill="#ffffff"/>
<rect x="759" y="275" width="216" height="1" fill="#ffffff"/>
<rect x="759" y="89" width="1" height="187" fill="#ffffff"/>
<rect x="974" y="89" width="1" height="187" fill="#ffffff"/>
<text x="758" y="77" font-size="16" fill="#fff" text-anchor="start" letter-spacing="-0.25">Pxx - X Power Spectral Density</text>
<text x="728.5" y="95" font-size="16" fill="#fff" text-anchor="start" >10</text>
<text x="746" y="85.5" font-size="10" fill="#fff" text-anchor="start" >1</text>
<text x="728.5" y="188" font-size="16" fill="#fff" text-anchor="start" >10</text>
<text x="746" y="178.5" font-size="10" fill="#fff" text-anchor="start" >0</text>
<text x="728.5" y="281" font-size="16" fill="#fff" text-anchor="start" >10</text>
<text x="746" y="271.5" font-size="10" fill="#fff" text-anchor="start" >-1</text>
<text x="759.5" y="295" font-size="16" fill="#fff" text-anchor="middle" >0</text>
<text x="867.5" y="295" font-size="16" fill="#fff" text-anchor="middle" >0.5</text>
<text x="974.5" y="295" font-size="16" fill="#fff" text-anchor="middle" >1</text>
<text x="867.5" y="314" font-size="16" fill="#fff" text-anchor="middle" letter-spacing="-0.3">Frequency</text>
<rect x="759" y="352" width="3" height="1" fill="#ffffff"/>
<rect x="972" y="352" width="3" height="1" fill="#ffffff"/>
<rect x="759" y="361" width="3" height="1" fill="#ffffff"/>
<rect x="972" y="361" width="3" height="1" fill="#ffffff"/>
<rect x="759" y="370" width="3" height="1" fill="#ffffff"/>
<rect x="972" y="370" width="3" height="1" fill="#ffffff"/>
<rect x="759" y="379" width="3" height="1" fill="#ffffff"/>
<rect x="972" y="379" width="3" height="1" fill="#ffffff"/>
<rect x="759" y="389" width="3" height="1" fill="#ffffff"/>
<rect x="972" y="389" width="3" height="1" fill="#ffffff"/>
<rect x="759" y="398" width="3" height="1" fill="#ffffff"/>
<rect x="972" y="398" width="3" height="1" fill="#ffffff"/>
<rect x="759" y="407" width="3" height="1" fill="#ffffff"/>
<rect x="972" y="407" width="3" height="1" fill="#ffffff"/>
<rect x="759" y="417" width="3" height="1" fill="#ffffff"/>
<rect x="972" y="417" width="3" height="1" fill="#ffffff"/>
<rect x="759" y="426" width="3" height="1" fill="#ffffff"/>
<rect x="972" y="426" width="3" height="1" fill="#ffffff"/>
<rect x="759" y="435" width="3" height="1" fill="#ffffff"/>
<rect x="972" y="435" width="3" height="1" fill="#ffffff"/>
<rect x="759" y="444" width="3" height="1" fill="#ffffff"/>
<rect x="972" y="444" width="3" height="1" fill="#ffffff"/>
<rect x="759" y="454" width="3" height="1" fill="#ffffff"/>
<rect x="972" y="454" width="3" height="1" fill="#ffffff"/>
<rect x="759" y="463" width="3" height="1" fill="#ffffff"/>
<rect x="972" y="463" width="3" height="1" fill="#ffffff"/>
<rect x="759" y="472" width="3" height="1" fill="#ffffff"/>
<rect x="972" y="472" width="3" height="1" fill="#ffffff"/>
<rect x="759" y="482" width="3" height="1" fill="#ffffff"/>
<rect x="972" y="482" width="3" height="1" fill="#ffffff"/>
<rect x="759" y="491" width="3" height="1" fill="#ffffff"/>
<rect x="972" y="491" width="3" height="1" fill="#ffffff"/>
<rect x="759" y="500" width="3" height="1" fill="#ffffff"/>
<rect x="972" y="500" width="3" height="1" fill="#ffffff"/>
<rect x="759" y="510" width="3" height="1" fill="#ffffff"/>
<rect x="972" y="510" width="3" height="1" fill="#ffffff"/>
<rect x="759" y="519" width="3" height="1" fill="#ffffff"/>
<rect x="972" y="519" width="3" height="1" fill="#ffffff"/>
<rect x="759" y="528" width="3" height="1" fill="#ffffff"/>
<rect x="972" y="528" width="3" height="1" fill="#ffffff"/>
<rect x="759" y="398" width="4" height="1" fill="#ffffff"/>
<rect x="767" y="398" width="4" height="1" fill="#ffffff"/>
<rect x="775" y="398" width="4" height="1" fill="#ffffff"/>
<rect x="783" y="398" width="4" height="1" fill="#ffffff"/>
<rect x="791" y="398" width="4" height="1" fill="#ffffff"/>
<rect x="799" y="398" width="4" height="1" fill="#ffffff"/>
<rect x="807" y="398" width="4" height="1" fill="#ffffff"/>
<rect x="815" y="398" width="4" height="1" fill="#ffffff"/>
<rect x="823" y="398" width="4" height="1" fill="#ffffff"/>
<rect x="831" y="398" width="4" height="1" fill="#ffffff"/>
<rect x="839" y="398" width="4" height="1" fill="#ffffff"/>
<rect x="847" y="398" width="4" height="1" fill="#ffffff"/>
<rect x="855" y="398" width="4" height="1" fill="#ffffff"/>
<rect x="863" y="398" width="4" height="1" fill="#ffffff"/>
<rect x="871" y="398" width="4" height="1" fill="#ffffff"/>
<rect x="879" y="398" width="4" height="1" fill="#ffffff"/>
<rect x="887" y="398" width="4" height="1" fill="#ffffff"/>
<rect x="895" y="398" width="4" height="1" fill="#ffffff"/>
<rect x="903" y="398" width="4" height="1" fill="#ffffff"/>
<rect x="911" y="398" width="4" height="1" fill="#ffffff"/>
<rect x="919" y="398" width="4" height="1" fill="#ffffff"/>
<rect x="927" y="398" width="4" height="1" fill="#ffffff"/>
<rect x="935" y="398" width="4" height="1" fill="#ffffff"/>
<rect x="943" y="398" width="4" height="1" fill="#ffffff"/>
<rect x="951" y="398" width="4" height="1" fill="#ffffff"/>
<rect x="959" y="398" width="4" height="1" fill="#ffffff"/>
<rect x="967" y="398" width="4" height="1" fill="#ffffff"/>
<rect x="759" y="444" width="4" height="1" fill="#ffffff"/>
<rect x="767" y="444" width="4" height="1" fill="#ffffff"/>
<rect x="775" y="444" width="4" height="1" fill="#ffffff"/>
<rect x="783" y="444" width="4" height="1" fill="#ffffff"/>
<rect x="791" y="444" width="4" height="1" fill="#ffffff"/>
<rect x="799" y="444" width="4" height="1" fill="#ffffff"/>
<rect x="807" y="444" width="4" height="1" fill="#ffffff"/>
<rect x="815" y="444" width="4" height="1" fill="#ffffff"/>
<rect x="823" y="444" width="4" height="1" fill="#ffffff"/>
<rect x="831" y="444" width="4" height="1" fill="#ffffff"/>
<rect x="839" y="444" width="4" height="1" fill="#ffffff"/>
<rect x="847" y="444" width="4" height="1" fill="#ffffff"/>
<rect x="855" y="444" width="4" height="1" fill="#ffffff"/>
<rect x="863" y="444" width="4" height="1" fill="#ffffff"/>
<rect x="871" y="444" width="4" height="1" fill="#ffffff"/>
<rect x="879" y="444" width="4" height="1" fill="#ffffff"/>
<rect x="887" y="444" width="4" height="1" fill="#ffffff"/>
<rect x="895" y="444" width="4" height="1" fill="#ffffff"/>
<rect x="903" y="444" width="4" height="1" fill="#ffffff"/>
<rect x="911" y="444" width="4" height="1" fill="#ffffff"/>
<rect x="919" y="444" width="4" height="1" fill="#ffffff"/>
<rect x="927" y="444" width="4" height="1" fill="#ffffff"/>
<rect x="935" y="444" width="4" height="1" fill="#ffffff"/>
<rect x="943" y="444" width="4" height="1" fill="#ffffff"/>
<rect x="951" y="444" width="4" height="1" fill="#ffffff"/>
<rect x="959" y="444" width="4" height="1" fill="#ffffff"/>
<rect x="967" y="444" width="4" height="1" fill="#ffffff"/>
<rect x="759" y="491" width="4" height="1" fill="#ffffff"/>
<rect x="767" y="491" width="4" height="1" fill="#ffffff"/>
<rect x="775" y="491" width="4" height="1" fill="#ffffff"/>
<rect x="783" y="491" width="4" height="1" fill="#ffffff"/>
<rect x="791" y="491" width="4" height="1" fill="#ffffff"/>
<rect x="799" y="491" width="4" height="1" fill="#ffffff"/>
<rect x="807" y="491" width="4" height="1" fill="#ffffff"/>
<rect x="815" y="491" width="4" height="1" fill="#ffffff"/>
<rect x="823" y="491" width="4" height="1" fill="#ffffff"/>
<rect x="831" y="491" width="4" height="1" fill="#ffffff"/>
<rect x="839" y="491" width="4" height="1" fill="#ffffff"/>
<rect x="847" y="491" width="4" height="1" fill="#ffffff"/>
<rect x="855" y="491" width="4" height="1" fill="#ffffff"/>
<rect x="863" y="491" width="4" height="1" fill="#ffffff"/>
<rect x="871" y="491" width="4" height="1" fill="#ffffff"/>
<rect x="879" y="491" width="4" height="1" fill="#ffffff"/>
<rect x="887" y="491" width="4" height="1" fill="#ffffff"/>
<rect x="895" y="491" width="4" height="1" fill="#ffffff"/>
<rect x="903" y="491" width="4" height="1" fill="#ffffff"/>
<rect x="911" y="491" width="4" height="1" fill="#ffffff"/>
<rect x="919" y="491" width="4" height="1" fill="#ffffff"/>
<rect x="927" y="491" width="4" height="1" fill="#ffffff"/>
<rect x="935" y="491" width="4" height="1" fill="#ffffff"/>
<rect x="943" y="491" width="4" height="1" fill="#ffffff"/>
<rect x="951" y="491" width="4" height="1" fill="#ffffff"/>
<rect x="959" y="491" width="4" height="1" fill="#ffffff"/>
<rect x="967" y="491" width="4" height="1" fill="#ffffff"/>
<rect x="867" y="351" width="1" height="4" fill="#ffffff"/>
<rect x="867" y="359" width="1" height="4" fill="#ffffff"/>
<rect x="867" y="367" width="1" height="4" fill="#ffffff"/>
<rect x="867" y="375" width="1" height="4" fill="#ffffff"/>
<rect x="867" y="383" width="1" height="4" fill="#ffffff"/>
<rect x="867" y="391" width="1" height="4" fill="#ffffff"/>
<rect x="867" y="399" width="1" height="4" fill="#ffffff"/>
<rect x="867" y="407" width="1" height="4" fill="#ffffff"/>
<rect x="867" y="415" width="1" height="4" fill="#ffffff"/>
<rect x="867" y="423" width="1" height="4" fill="#ffffff"/>
<rect x="867" y="431" width="1" height="4" fill="#ffffff"/>
<rect x="867" y="439" width="1" height="4" fill="#ffffff"/>
<rect x="867" y="447" width="1" height="4" fill="#ffffff"/>
<rect x="867" y="455" width="1" height="4" fill="#ffffff"/>
<rect x="867" y="463" width="1" height="4" fill="#ffffff"/>
<rect x="867" y="471" width="1" height="4" fill="#ffffff"/>
<rect x="867" y="479" width="1" height="4" fill="#ffffff"/>
<rect x="867" y="487" width="1" height="4" fill="#ffffff"/>
<rect x="867" y="495" width="1" height="4" fill="#ffffff"/>
<rect x="867" y="503" width="1" height="4" fill="#ffffff"/>
<rect x="867" y="511" width="1" height="4" fill="#ffffff"/>
<rect x="867" y="519" width="1" height="4" fill="#ffffff"/>
<rect x="867" y="527" width="1" height="4" fill="#ffffff"/>
<rect x="867" y="535" width="1" height="4" fill="#ffffff"/>
<rect x="759" y="351" width="216" height="1" fill="#ffffff"/>
<rect x="759" y="538" width="216" height="1" fill="#ffffff"/>
<rect x="759" y="351" width="1" height="188" fill="#ffffff"/>
<rect x="974" y="351" width="1" height="188" fill="#ffffff"/>
<polyline points="759.0,406.1 759.8,405.7 760.7,403.6 761.5,402.1 762.3,401.2 763.2,401.8 764.0,400.1 764.8,399.1 765.6,400.3 766.5,399.9 767.3,400.4 768.1,398.8 769.0,399.8 769.8,399.7 770.6,398.1 771.5,400.4 772.3,400.2 773.1,402.4 773.9,400.0 774.8,399.6 775.6,401.2 776.4,400.0 777.3,400.8 778.1,399.4 778.9,400.0 779.8,400.9 780.6,400.6 781.4,399.9 782.2,398.6 783.1,400.3 783.9,399.9 784.7,400.6 785.6,400.0 786.4,401.0 787.2,399.7 788.1,400.0 788.9,400.5 789.7,398.6 790.5,399.4 791.4,399.2 792.2,402.0 793.0,399.7 793.9,400.5 794.7,400.5 795.5,399.5 796.4,398.1 797.2,400.9 798.0,399.4 798.8,400.6 799.7,398.4 800.5,399.3 801.3,401.2 802.2,401.4 803.0,398.4 803.8,399.0 804.7,403.1 805.5,406.2 806.3,410.0 807.1,414.2 808.0,417.5 808.8,422.6 809.6,427.0 810.5,427.2 811.3,427.8 812.1,429.5 813.0,431.7 813.8,431.3 814.6,433.7 815.4,434.3 816.3,436.1 817.1,437.3 817.9,438.7 818.8,440.8 819.6,441.2 820.4,442.9 821.3,443.0 822.1,443.9 822.9,445.6 823.7,444.6 824.6,447.6 825.4,448.8 826.2,449.0 827.1,451.3 827.9,451.7 828.7,451.6 829.6,454.2 830.4,454.8 831.2,456.3 832.1,457.6 832.9,459.7 833.7,460.1 834.5,461.1 835.4,462.5 836.2,462.2 837.0,465.3 837.9,464.6 838.7,466.3 839.5,466.0 840.4,466.9 841.2,468.0 842.0,470.3 842.8,470.2 843.7,470.1 844.5,471.1 845.3,471.3 846.2,472.8 847.0,473.2 847.8,474.8 848.7,474.1 849.5,475.6 850.3,476.0 851.1,476.8 852.0,478.4 852.8,478.7 853.6,479.7 854.5,480.8 855.3,481.5 856.1,480.5 857.0,482.4 857.8,481.6 858.6,483.4 859.4,485.4 860.3,484.7 861.1,485.3 861.9,486.3 862.8,486.9 863.6,487.6 864.4,487.8 865.3,489.7 866.1,490.2 866.9,490.2 867.7,491.1 868.6,491.9 869.4,492.7 870.2,492.8 871.1,493.6 871.9,493.5 872.7,493.6 873.6,494.5 874.4,496.1 875.2,496.6 876.0,496.6 876.9,496.7 877.7,497.8 878.5,499.3 879.4,499.6 880.2,498.9 881.0,499.9 881.9,499.6 882.7,500.4 883.5,501.8 884.3,501.9 885.2,502.9 886.0,503.4 886.8,503.4 887.7,504.0 888.5,503.1 889.3,503.0 890.2,504.3 891.0,506.1 891.8,504.8 892.6,504.1 893.5,505.4 894.3,506.4 895.1,505.1 896.0,506.6 896.8,506.0 897.6,507.5 898.5,507.5 899.3,507.5 900.1,508.9 900.9,507.6 901.8,507.7 902.6,509.7 903.4,508.2 904.3,510.5 905.1,509.3 905.9,508.9 906.8,509.8 907.6,510.1 908.4,510.3 909.3,510.3 910.1,511.3 910.9,509.3 911.7,510.6 912.6,511.0 913.4,512.6 914.2,510.3 915.1,511.6 915.9,511.3 916.7,511.8 917.6,512.9 918.4,512.9 919.2,513.8 920.0,512.7 920.9,513.4 921.7,514.2 922.5,514.3 923.4,513.6 924.2,514.8 925.0,513.7 925.9,515.7 926.7,514.8 927.5,514.8 928.3,515.3 929.2,515.9 930.0,516.6 930.8,515.6 931.7,515.7 932.5,516.5 933.3,515.7 934.2,515.3 935.0,517.1 935.8,516.5 936.6,517.6 937.5,516.3 938.3,515.3 939.1,517.5 940.0,517.6 940.8,518.7 941.6,518.1 942.5,518.1 943.3,518.5 944.1,518.0 944.9,518.4 945.8,517.6 946.6,519.0 947.4,518.3 948.3,518.7 949.1,519.6 949.9,519.9 950.8,518.8 951.6,520.9 952.4,519.3 953.2,520.4 954.1,520.7 954.9,520.3 955.7,520.5 956.6,521.7 957.4,521.2 958.2,521.1 959.1,519.7 959.9,520.6 960.7,522.0 961.5,521.5 962.4,520.9 963.2,521.3 964.0,521.7 964.9,522.5 965.7,522.4 966.5,523.0 967.4,521.9 968.2,523.3 969.0,522.4 969.8,522.7 970.7,524.2 971.5,523.3 972.3,523.3 973.2,523.4 974.0,523.3" fill="none" stroke="#ff00ff" stroke-width="1"/>
<polyline points="759.0,404.3 759.8,401.9 760.7,402.0 761.5,401.2 762.3,401.1 763.2,399.2 764.0,399.2 764.8,398.4 765.6,397.6 766.5,397.5 767.3,397.7 768.1,397.8 769.0,397.5 769.8,398.3 770.6,397.7 771.5,396.1 772.3,398.7 773.1,397.8 773.9,397.6 774.8,398.2 775.6,398.1 776.4,398.0 777.3,397.5 778.1,398.1 778.9,397.1 779.8,398.9 780.6,397.2 781.4,397.9 782.2,398.0 783.1,398.1 783.9,397.9 784.7,398.3 785.6,395.8 786.4,397.9 787.2,397.8 788.1,397.7 788.9,398.8 789.7,397.3 790.5,397.9 791.4,396.7 792.2,398.1 793.0,396.9 793.9,397.0 794.7,399.3 795.5,398.3 796.4,397.9 797.2,398.0 798.0,397.0 798.8,397.3 799.7,398.2 800.5,396.6 801.3,398.1 802.2,396.9 803.0,398.0 803.8,398.0 804.7,401.9 805.5,404.3 806.3,407.8 807.1,411.5 808.0,416.0 808.8,420.4 809.6,424.0 810.5,425.8 811.3,427.3 812.1,428.1 813.0,429.2 813.8,430.9 814.6,431.8 815.4,433.4 816.3,434.3 817.1,436.2 817.9,436.7 818.8,437.6 819.6,439.1 820.4,439.9 821.3,440.9 822.1,442.4 822.9,443.8 823.7,443.8 824.6,445.7 825.4,446.8 826.2,447.9 827.1,449.4 827.9,449.8 828.7,451.6 829.6,452.4 830.4,453.7 831.2,454.7 832.1,455.8 832.9,456.8 833.7,458.3 834.5,460.1 835.4,460.8 836.2,461.9 837.0,462.9 837.9,463.3 838.7,464.4 839.5,465.7 840.4,465.2 841.2,466.7 842.0,467.6 842.8,468.1 843.7,469.0 844.5,470.0 845.3,471.0 846.2,471.4 847.0,472.3 847.8,472.6 848.7,473.5 849.5,474.0 850.3,474.8 851.1,475.3 852.0,476.4 852.8,477.3 853.6,477.4 854.5,478.3 855.3,479.1 856.1,479.6 857.0,480.6 857.8,481.0 858.6,481.2 859.4,481.9 860.3,483.3 861.1,483.9 861.9,484.8 862.8,485.2 863.6,485.8 864.4,485.9 865.3,487.6 866.1,487.5 866.9,488.9 867.7,488.7 868.6,489.4 869.4,490.3 870.2,490.6 871.1,491.1 871.9,492.2 872.7,492.7 873.6,493.2 874.4,493.5 875.2,493.8 876.0,494.5 876.9,495.1 877.7,495.8 878.5,496.7 879.4,496.9 880.2,497.2 881.0,497.8 881.9,499.0 882.7,499.2 883.5,499.7 884.3,499.9 885.2,500.3 886.0,500.3 886.8,500.9 887.7,501.0 888.5,500.0 889.3,501.2 890.2,502.5 891.0,501.2 891.8,502.0 892.6,502.6 893.5,502.4 894.3,503.1 895.1,502.4 896.0,502.7 896.8,503.3 897.6,503.3 898.5,503.4 899.3,504.3 900.1,504.4 900.9,504.5 901.8,504.6 902.6,505.1 903.4,505.2 904.3,505.2 905.1,505.9 905.9,506.0 906.8,506.0 907.6,506.4 908.4,505.9 909.3,506.4 910.1,506.4 910.9,507.2 911.7,507.0 912.6,507.8 913.4,507.7 914.2,507.1 915.1,507.0 915.9,507.7 916.7,507.6 917.6,507.8 918.4,507.6 919.2,508.3 920.0,508.3 920.9,508.6 921.7,508.7 922.5,508.4 923.4,508.0 924.2,508.9 925.0,508.9 925.9,509.1 926.7,509.8 927.5,509.5 928.3,510.2 929.2,509.9 930.0,510.2 930.8,510.3 931.7,510.6 932.5,509.9 933.3,510.9 934.2,510.6 935.0,510.3 935.8,511.0 936.6,511.0 937.5,511.4 938.3,511.3 939.1,511.2 940.0,510.6 940.8,511.9 941.6,511.9 942.5,511.8 943.3,511.7 944.1,512.1 944.9,511.4 945.8,512.1 946.6,511.9 947.4,511.6 948.3,512.2 949.1,512.3 949.9,512.9 950.8,512.7 951.6,511.9 952.4,511.8 953.2,512.6 954.1,512.6 954.9,512.5 955.7,512.4 956.6,512.9 957.4,512.7 958.2,512.9 959.1,513.6 959.9,513.4 960.7,513.2 961.5,513.1 962.4,513.5 963.2,514.3 964.0,513.6 964.9,514.5 965.7,513.7 966.5,514.0 967.4,514.4 968.2,514.0 969.0,514.4 969.8,513.9 970.7,514.7 971.5,515.0 972.3,514.5 973.2,514.8 974.0,514.7" fill="none" stroke="#00ffff" stroke-width="1"/>
<polyline points="759.0,403.5 759.8,403.3 760.7,402.1 761.5,402.1 762.3,401.1 763.2,400.5 764.0,400.6 764.8,399.5 765.6,398.8 766.5,398.8 767.3,398.9 768.1,398.6 769.0,398.8 769.8,398.3 770.6,398.5 771.5,398.5 772.3,398.2 773.1,398.1 773.9,398.1 774.8,398.5 775.6,398.5 776.4,398.5 777.3,398.6 778.1,398.2 778.9,398.6 779.8,398.7 780.6,398.8 781.4,398.3 782.2,398.5 783.1,398.0 783.9,398.4 784.7,397.9 785.6,398.2 786.4,398.9 787.2,397.9 788.1,398.8 788.9,398.7 789.7,398.5 790.5,398.7 791.4,398.8 792.2,398.9 793.0,398.5 793.9,398.4 794.7,398.4 795.5,398.3 796.4,398.6 797.2,398.4 798.0,398.9 798.8,398.0 799.7,398.3 800.5,398.3 801.3,398.0 802.2,399.2 803.0,397.9 803.8,399.2 804.7,401.8 805.5,404.9 806.3,408.3 807.1,413.0 808.0,416.8 808.8,421.0 809.6,424.9 810.5,426.4 811.3,427.3 812.1,428.8 813.0,430.1 813.8,431.6 814.6,432.1 815.4,434.0 816.3,435.2 817.1,436.2 817.9,437.5 818.8,438.5 819.6,440.0 820.4,440.9 821.3,441.9 822.1,443.0 822.9,444.1 823.7,445.2 824.6,446.2 825.4,447.9 826.2,448.3 827.1,449.1 827.9,450.9 828.7,452.0 829.6,453.2 830.4,454.2 831.2,455.4 832.1,456.6 832.9,457.9 833.7,458.7 834.5,459.9 835.4,461.4 836.2,462.3 837.0,463.2 837.9,464.5 838.7,465.0 839.5,465.5 840.4,466.1 841.2,467.1 842.0,467.7 842.8,468.4 843.7,469.1 844.5,470.0 845.3,471.0 846.2,471.5 847.0,472.1 847.8,473.2 848.7,473.9 849.5,474.7 850.3,475.6 851.1,476.0 852.0,476.7 852.8,477.4 853.6,477.9 854.5,478.9 855.3,479.7 856.1,480.2 857.0,480.8 857.8,481.5 858.6,482.1 859.4,482.8 860.3,483.6 861.1,484.2 861.9,484.9 862.8,485.4 863.6,486.4 864.4,487.1 865.3,487.5 866.1,488.0 866.9,489.1 867.7,489.9 868.6,490.1 869.4,490.7 870.2,491.3 871.1,492.1 871.9,492.3 872.7,493.2 873.6,493.6 874.4,494.4 875.2,494.8 876.0,495.3 876.9,495.6 877.7,496.3 878.5,496.9 879.4,497.7 880.2,498.1 881.0,498.5 881.9,499.3 882.7,500.0 883.5,500.2 884.3,500.4 885.2,500.7 886.0,501.2 886.8,501.4 887.7,501.4 888.5,501.9 889.3,502.0 890.2,502.2 891.0,502.8 891.8,503.0 892.6,503.0 893.5,503.4 894.3,503.7 895.1,503.8 896.0,504.1 896.8,504.5 897.6,504.3 898.5,505.0 899.3,505.3 900.1,505.5 900.9,505.4 901.8,506.0 902.6,506.0 903.4,506.6 904.3,506.8 905.1,507.0 905.9,507.0 906.8,507.2 907.6,507.6 908.4,507.5 909.3,507.9 910.1,508.1 910.9,508.1 911.7,508.7 912.6,508.5 913.4,509.0 914.2,508.4 915.1,508.5 915.9,509.3 916.7,509.4 917.6,509.4 918.4,509.6 919.2,509.4 920.0,509.8 920.9,509.9 921.7,510.2 922.5,510.6 923.4,510.6 924.2,510.8 925.0,510.8 925.9,511.0 926.7,511.3 927.5,511.4 928.3,511.8 929.2,511.6 930.0,512.2 930.8,511.9 931.7,512.4 932.5,512.3 933.3,512.8 934.2,512.6 935.0,512.8 935.8,513.0 936.6,512.8 937.5,512.9 938.3,512.8 939.1,513.5 940.0,513.3 940.8,513.4 941.6,513.6 942.5,514.1 943.3,513.5 944.1,514.0 944.9,514.0 945.8,514.3 946.6,514.0 947.4,514.3 948.3,514.7 949.1,514.9 949.9,515.0 950.8,514.7 951.6,515.0 952.4,515.1 953.2,514.9 954.1,515.0 954.9,515.5 955.7,515.6 956.6,515.6 957.4,516.0 958.2,515.7 959.1,516.1 959.9,516.1 960.7,516.2 961.5,516.4 962.4,516.4 963.2,516.6 964.0,516.7 964.9,517.1 965.7,516.8 966.5,517.1 967.4,517.2 968.2,517.1 969.0,517.4 969.8,517.3 970.7,517.7 971.5,517.5 972.3,517.7 973.2,517.9 974.0,518.0" fill="none" stroke="#ffff00" stroke-width="1"/>
<text x="758" y="339" font-size="16" fill="#fff" text-anchor="start" letter-spacing="-0.25">Pxx - X Power Spectral Density</text>
<text x="722" y="358" font-size="16" fill="#fff" text-anchor="start" >10</text>
<text x="739.5" y="348.5" font-size="10" fill="#fff" text-anchor="start" >5</text>
<text x="722" y="404" font-size="16" fill="#fff" text-anchor="start" >10</text>
<text x="739.5" y="394.5" font-size="10" fill="#fff" text-anchor="start" >0</text>
<text x="722" y="450" font-size="16" fill="#fff" text-anchor="start" >10</text>
<text x="739.5" y="440.5" font-size="10" fill="#fff" text-anchor="start" >-5</text>
<text x="722" y="497" font-size="16" fill="#fff" text-anchor="start" >10</text>
<text x="739.5" y="487.5" font-size="10" fill="#fff" text-anchor="start" >-10</text>
<text x="722" y="544" font-size="16" fill="#fff" text-anchor="start" >10</text>
<text x="739.5" y="534.5" font-size="10" fill="#fff" text-anchor="start" >-15</text>
<text x="759.5" y="557" font-size="16" fill="#fff" text-anchor="middle" >0</text>
<text x="867.5" y="557" font-size="16" fill="#fff" text-anchor="middle" >0.5</text>
<text x="974.5" y="557" font-size="16" fill="#fff" text-anchor="middle" >1</text>
<text x="867.5" y="576" font-size="16" fill="#fff" text-anchor="middle" letter-spacing="-0.3">Frequency</text></g></g></svg>
<div class="a" style="left:1px;top:0px;width:719px;height:604px;background:#9aa0a8;"></div>
<div class="a" style="left:2px;top:1px;width:716px;height:1px;background:#d6d8e0;"></div>
<div class="a" style="left:2px;top:1px;width:1px;height:601px;background:#d6d8e0;"></div>
<div class="a" style="left:718px;top:1px;width:1px;height:602px;background:#5c6270;"></div>
<div class="a" style="left:719px;top:0px;width:1px;height:604px;background:#000;"></div>
<div class="a" style="left:2px;top:602px;width:717px;height:1px;background:#5c6270;"></div>
<div class="a" style="left:1px;top:603px;width:719px;height:1px;background:#000;"></div>
<div class="a" style="left:5px;top:4px;width:711px;height:22px;background:#000;"></div>
<svg style="left:7px;top:5px;" width="20" height="20" viewBox="0 0 20 20"><rect x="1" y="2" width="14" height="17" fill="#f0f000"/><rect x="1" y="2" width="1" height="1" fill="#ffffff"/><rect x="1" y="5" width="1" height="1" fill="#ffffff"/><rect x="1" y="8" width="1" height="1" fill="#ffffff"/><rect x="1" y="11" width="1" height="1" fill="#ffffff"/><rect x="1" y="14" width="1" height="1" fill="#ffffff"/><rect x="1" y="17" width="1" height="1" fill="#ffffff"/><rect x="2" y="4" width="1" height="1" fill="#ffffff"/><rect x="2" y="7" width="1" height="1" fill="#ffffff"/><rect x="2" y="10" width="1" height="1" fill="#ffffff"/><rect x="2" y="13" width="1" height="1" fill="#ffffff"/><rect x="2" y="16" width="1" height="1" fill="#ffffff"/><rect x="3" y="3" width="1" height="1" fill="#ffffff"/><rect x="3" y="6" width="1" height="1" fill="#ffffff"/><rect x="3" y="9" width="1" height="1" fill="#ffffff"/><rect x="3" y="12" width="1" height="1" fill="#ffffff"/><rect x="3" y="15" width="1" height="1" fill="#ffffff"/><rect x="3" y="18" width="1" height="1" fill="#ffffff"/><rect x="4" y="2" width="1" height="1" fill="#ffffff"/><rect x="4" y="5" width="1" height="1" fill="#ffffff"/><rect x="4" y="8" width="1" height="1" fill="#ffffff"/><rect x="4" y="11" width="1" height="1" fill="#ffffff"/><rect x="4" y="14" width="1" height="1" fill="#ffffff"/><rect x="4" y="17" width="1" height="1" fill="#ffffff"/><rect x="5" y="4" width="1" height="1" fill="#ffffff"/><rect x="5" y="7" width="1" height="1" fill="#ffffff"/><rect x="5" y="10" width="1" height="1" fill="#ffffff"/><rect x="5" y="13" width="1" height="1" fill="#ffffff"/><rect x="5" y="16" width="1" height="1" fill="#ffffff"/><rect x="6" y="3" width="1" height="1" fill="#ffffff"/><rect x="6" y="6" width="1" height="1" fill="#ffffff"/><rect x="6" y="9" width="1" height="1" fill="#ffffff"/><rect x="6" y="12" width="1" height="1" fill="#ffffff"/><rect x="6" y="15" width="1" height="1" fill="#ffffff"/><rect x="6" y="18" width="1" height="1" fill="#ffffff"/><rect x="7" y="2" width="1" height="1" fill="#ffffff"/><rect x="7" y="5" width="1" height="1" fill="#ffffff"/><rect x="7" y="8" width="1" height="1" fill="#ffffff"/><rect x="7" y="11" width="1" height="1" fill="#ffffff"/><rect x="7" y="14" width="1" height="1" fill="#ffffff"/><rect x="7" y="17" width="1" height="1" fill="#ffffff"/><rect x="8" y="4" width="1" height="1" fill="#ffffff"/><rect x="8" y="7" width="1" height="1" fill="#ffffff"/><rect x="8" y="10" width="1" height="1" fill="#ffffff"/><rect x="8" y="13" width="1" height="1" fill="#ffffff"/><rect x="8" y="16" width="1" height="1" fill="#ffffff"/><rect x="9" y="3" width="1" height="1" fill="#ffffff"/><rect x="9" y="6" width="1" height="1" fill="#ffffff"/><rect x="9" y="9" width="1" height="1" fill="#ffffff"/><rect x="9" y="12" width="1" height="1" fill="#ffffff"/><rect x="9" y="15" width="1" height="1" fill="#ffffff"/><rect x="9" y="18" width="1" height="1" fill="#ffffff"/><rect x="10" y="2" width="1" height="1" fill="#ffffff"/><rect x="10" y="5" width="1" height="1" fill="#ffffff"/><rect x="10" y="8" width="1" height="1" fill="#ffffff"/><rect x="10" y="11" width="1" height="1" fill="#ffffff"/><rect x="10" y="14" width="1" height="1" fill="#ffffff"/><rect x="10" y="17" width="1" height="1" fill="#ffffff"/><rect x="11" y="4" width="1" height="1" fill="#ffffff"/><rect x="11" y="7" width="1" height="1" fill="#ffffff"/><rect x="11" y="10" width="1" height="1" fill="#ffffff"/><rect x="11" y="13" width="1" height="1" fill="#ffffff"/><rect x="11" y="16" width="1" height="1" fill="#ffffff"/><rect x="12" y="3" width="1" height="1" fill="#ffffff"/><rect x="12" y="6" width="1" height="1" fill="#ffffff"/><rect x="12" y="9" width="1" height="1" fill="#ffffff"/><rect x="12" y="12" width="1" height="1" fill="#ffffff"/><rect x="12" y="15" width="1" height="1" fill="#ffffff"/><rect x="12" y="18" width="1" height="1" fill="#ffffff"/><rect x="13" y="2" width="1" height="1" fill="#ffffff"/><rect x="13" y="5" width="1" height="1" fill="#ffffff"/><rect x="13" y="8" width="1" height="1" fill="#ffffff"/><rect x="13" y="11" width="1" height="1" fill="#ffffff"/><rect x="13" y="14" width="1" height="1" fill="#ffffff"/><rect x="13" y="17" width="1" height="1" fill="#ffffff"/><rect x="14" y="4" width="1" height="1" fill="#ffffff"/><rect x="14" y="7" width="1" height="1" fill="#ffffff"/><rect x="14" y="10" width="1" height="1" fill="#ffffff"/><rect x="14" y="13" width="1" height="1" fill="#ffffff"/><rect x="14" y="16" width="1" height="1" fill="#ffffff"/><rect x="4" y="5" width="1" height="12" fill="#000"/><rect x="2" y="5" width="6" height="1" fill="#303030"/><rect x="2" y="15" width="6" height="1" fill="#000"/><rect x="9" y="8" width="4" height="1" fill="#303030"/><rect x="10" y="10" width="1" height="8" fill="#000"/><rect x="12" y="12" width="3" height="1" fill="#404040"/><path d="M11,9 L17,2 L20,4 L14,11 Z" fill="#d00000" stroke="#700000" stroke-width="1" /><path d="M11,9 L14,11 L11,13 Z" fill="#e0e0e0" stroke="none" stroke-width="1" /><rect x="18" y="7" width="1" height="12" fill="#a0a0a0"/></svg>
<div class="t" style="left:30px;top:7.76px;font-size:16px;color:#f0e040;font-weight:bold;font-style:italic;letter-spacing:-0.3px">MicroSim Schematics - [ top&nbsp; p.1&nbsp;&nbsp; ]</div>
<div class="a" style="left:652px;top:6px;width:20px;height:18px;background:#9aa0a8;"></div>
<div class="a" style="left:652px;top:6px;width:20px;height:1px;background:#d6d8e0;"></div>
<div class="a" style="left:652px;top:6px;width:1px;height:18px;background:#d6d8e0;"></div>
<div class="a" style="left:652px;top:23px;width:20px;height:1px;background:#000;"></div>
<div class="a" style="left:671px;top:6px;width:1px;height:18px;background:#000;"></div>
<svg style="left:652px;top:6px;shape-rendering:crispEdges" width="20" height="18" viewBox="0 0 20 18"><rect x="5" y="12" width="7" height="2" fill="#000"/></svg>
<div class="a" style="left:672px;top:6px;width:20px;height:18px;background:#9aa0a8;"></div>
<div class="a" style="left:672px;top:6px;width:20px;height:1px;background:#d6d8e0;"></div>
<div class="a" style="left:672px;top:6px;width:1px;height:18px;background:#d6d8e0;"></div>
<div class="a" style="left:672px;top:23px;width:20px;height:1px;background:#000;"></div>
<div class="a" style="left:691px;top:6px;width:1px;height:18px;background:#000;"></div>
<svg style="left:672px;top:6px;shape-rendering:crispEdges" width="20" height="18" viewBox="0 0 20 18"><rect x="4" y="4" width="11" height="10" fill="#000"/><rect x="5" y="6" width="9" height="7" fill="#9aa0a8"/></svg>
<div class="a" style="left:694px;top:6px;width:20px;height:18px;background:#9aa0a8;"></div>
<div class="a" style="left:694px;top:6px;width:20px;height:1px;background:#d6d8e0;"></div>
<div class="a" style="left:694px;top:6px;width:1px;height:18px;background:#d6d8e0;"></div>
<div class="a" style="left:694px;top:23px;width:20px;height:1px;background:#000;"></div>
<div class="a" style="left:713px;top:6px;width:1px;height:18px;background:#000;"></div>
<svg style="left:694px;top:6px;shape-rendering:crispEdges" width="20" height="18" viewBox="0 0 20 18"><path d="M5.3,5.3 L14.2,14.2 M14.2,5.3 L5.3,14.2" fill="none" stroke="#000" stroke-width="1.7" /></svg>
<svg style="left:11px;top:28px;" width="15" height="18" viewBox="0 0 15 18"><rect x="0" y="0" width="15" height="18" fill="#000"/><rect x="0" y="0" width="14" height="17" fill="#f0f000"/><rect x="0" y="0" width="1" height="1" fill="#ffffff"/><rect x="0" y="3" width="1" height="1" fill="#ffffff"/><rect x="0" y="6" width="1" height="1" fill="#ffffff"/><rect x="0" y="9" width="1" height="1" fill="#ffffff"/><rect x="0" y="12" width="1" height="1" fill="#ffffff"/><rect x="0" y="15" width="1" height="1" fill="#ffffff"/><rect x="1" y="2" width="1" height="1" fill="#ffffff"/><rect x="1" y="5" width="1" height="1" fill="#ffffff"/><rect x="1" y="8" width="1" height="1" fill="#ffffff"/><rect x="1" y="11" width="1" height="1" fill="#ffffff"/><rect x="1" y="14" width="1" height="1" fill="#ffffff"/><rect x="2" y="1" width="1" height="1" fill="#ffffff"/><rect x="2" y="4" width="1" height="1" fill="#ffffff"/><rect x="2" y="7" width="1" height="1" fill="#ffffff"/><rect x="2" y="10" width="1" height="1" fill="#ffffff"/><rect x="2" y="13" width="1" height="1" fill="#ffffff"/><rect x="2" y="16" width="1" height="1" fill="#ffffff"/><rect x="3" y="0" width="1" height="1" fill="#ffffff"/><rect x="3" y="3" width="1" height="1" fill="#ffffff"/><rect x="3" y="6" width="1" height="1" fill="#ffffff"/><rect x="3" y="9" width="1" height="1" fill="#ffffff"/><rect x="3" y="12" width="1" height="1" fill="#ffffff"/><rect x="3" y="15" width="1" height="1" fill="#ffffff"/><rect x="4" y="2" width="1" height="1" fill="#ffffff"/><rect x="4" y="5" width="1" height="1" fill="#ffffff"/><rect x="4" y="8" width="1" height="1" fill="#ffffff"/><rect x="4" y="11" width="1" height="1" fill="#ffffff"/><rect x="4" y="14" width="1" height="1" fill="#ffffff"/><rect x="5" y="1" width="1" height="1" fill="#ffffff"/><rect x="5" y="4" width="1" height="1" fill="#ffffff"/><rect x="5" y="7" width="1" height="1" fill="#ffffff"/><rect x="5" y="10" width="1" height="1" fill="#ffffff"/><rect x="5" y="13" width="1" height="1" fill="#ffffff"/><rect x="5" y="16" width="1" height="1" fill="#ffffff"/><rect x="6" y="0" width="1" height="1" fill="#ffffff"/><rect x="6" y="3" width="1" height="1" fill="#ffffff"/><rect x="6" y="6" width="1" height="1" fill="#ffffff"/><rect x="6" y="9" width="1" height="1" fill="#ffffff"/><rect x="6" y="12" width="1" height="1" fill="#ffffff"/><rect x="6" y="15" width="1" height="1" fill="#ffffff"/><rect x="7" y="2" width="1" height="1" fill="#ffffff"/><rect x="7" y="5" width="1" height="1" fill="#ffffff"/><rect x="7" y="8" width="1" height="1" fill="#ffffff"/><rect x="7" y="11" width="1" height="1" fill="#ffffff"/><rect x="7" y="14" width="1" height="1" fill="#ffffff"/><rect x="8" y="1" width="1" height="1" fill="#ffffff"/><rect x="8" y="4" width="1" height="1" fill="#ffffff"/><rect x="8" y="7" width="1" height="1" fill="#ffffff"/><rect x="8" y="10" width="1" height="1" fill="#ffffff"/><rect x="8" y="13" width="1" height="1" fill="#ffffff"/><rect x="8" y="16" width="1" height="1" fill="#ffffff"/><rect x="9" y="0" width="1" height="1" fill="#ffffff"/><rect x="9" y="3" width="1" height="1" fill="#ffffff"/><rect x="9" y="6" width="1" height="1" fill="#ffffff"/><rect x="9" y="9" width="1" height="1" fill="#ffffff"/><rect x="9" y="12" width="1" height="1" fill="#ffffff"/><rect x="9" y="15" width="1" height="1" fill="#ffffff"/><rect x="10" y="2" width="1" height="1" fill="#ffffff"/><rect x="10" y="5" width="1" height="1" fill="#ffffff"/><rect x="10" y="8" width="1" height="1" fill="#ffffff"/><rect x="10" y="11" width="1" height="1" fill="#ffffff"/><rect x="10" y="14" width="1" height="1" fill="#ffffff"/><rect x="11" y="1" width="1" height="1" fill="#ffffff"/><rect x="11" y="4" width="1" height="1" fill="#ffffff"/><rect x="11" y="7" width="1" height="1" fill="#ffffff"/><rect x="11" y="10" width="1" height="1" fill="#ffffff"/><rect x="11" y="13" width="1" height="1" fill="#ffffff"/><rect x="11" y="16" width="1" height="1" fill="#ffffff"/><rect x="12" y="0" width="1" height="1" fill="#ffffff"/><rect x="12" y="3" width="1" height="1" fill="#ffffff"/><rect x="12" y="6" width="1" height="1" fill="#ffffff"/><rect x="12" y="9" width="1" height="1" fill="#ffffff"/><rect x="12" y="12" width="1" height="1" fill="#ffffff"/><rect x="12" y="15" width="1" height="1" fill="#ffffff"/><rect x="13" y="2" width="1" height="1" fill="#ffffff"/><rect x="13" y="5" width="1" height="1" fill="#ffffff"/><rect x="13" y="8" width="1" height="1" fill="#ffffff"/><rect x="13" y="11" width="1" height="1" fill="#ffffff"/><rect x="13" y="14" width="1" height="1" fill="#ffffff"/><rect x="3" y="2" width="1" height="12" fill="#000"/><rect x="1" y="3" width="5" height="1" fill="#000"/><rect x="1" y="12" width="5" height="1" fill="#000"/><rect x="7" y="7" width="7" height="1" fill="#000"/><rect x="8" y="9" width="1" height="7" fill="#000"/><rect x="10" y="1" width="3" height="1" fill="#000"/><rect x="5" y="6" width="3" height="1" fill="#303030"/><rect x="5" y="9" width="3" height="1" fill="#303030"/></svg>
<div class="t" style="left:34.3px;top:30.84px;font-size:12px;color:#000;font-weight:normal;font-style:normal;text-underline-offset:1px;letter-spacing:0px"><u>F</u>ile</div>
<div class="t" style="left:68.2px;top:30.84px;font-size:12px;color:#000;font-weight:normal;font-style:normal;text-underline-offset:1px;letter-spacing:0px"><u>E</u>dit</div>
<div class="t" style="left:103.5px;top:30.84px;font-size:12px;color:#000;font-weight:normal;font-style:normal;text-underline-offset:1px;letter-spacing:0px"><u>D</u>raw</div>
<div class="t" style="left:146.7px;top:30.84px;font-size:12px;color:#000;font-weight:normal;font-style:normal;text-underline-offset:1px;letter-spacing:0px"><u>N</u>avigate</div>
<div class="t" style="left:207.8px;top:30.84px;font-size:12px;color:#000;font-weight:normal;font-style:normal;text-underline-offset:1px;letter-spacing:0px"><u>V</u>iew</div>
<div class="t" style="left:248px;top:30.84px;font-size:12px;color:#000;font-weight:normal;font-style:normal;text-underline-offset:1px;letter-spacing:0px"><u>O</u>ptions</div>
<div class="t" style="left:304.9px;top:30.84px;font-size:12px;color:#000;font-weight:normal;font-style:normal;text-underline-offset:1px;letter-spacing:0px"><u>A</u>nalysis</div>
<div class="t" style="left:364.7px;top:30.84px;font-size:12px;color:#000;font-weight:normal;font-style:normal;text-underline-offset:1px;letter-spacing:0px"><u>T</u>ools</div>
<div class="t" style="left:410.2px;top:30.84px;font-size:12px;color:#000;font-weight:normal;font-style:normal;text-underline-offset:1px;letter-spacing:0px"><u>M</u>arkers</div>
<div class="t" style="left:467.6px;top:30.84px;font-size:12px;color:#000;font-weight:normal;font-style:normal;text-underline-offset:1px;letter-spacing:0px"><u>W</u>indow</div>
<div class="t" style="left:526.1px;top:30.84px;font-size:12px;color:#000;font-weight:normal;font-style:normal;text-underline-offset:1px;letter-spacing:0px"><u>H</u>elp</div>
<div class="a" style="left:658px;top:29px;width:18px;height:16px;background:#9aa0a8;"></div>
<div class="a" style="left:658px;top:29px;width:18px;height:1px;background:#d6d8e0;"></div>
<div class="a" style="left:658px;top:29px;width:1px;height:16px;background:#d6d8e0;"></div>
<div class="a" style="left:658px;top:44px;width:18px;height:1px;background:#000;"></div>
<div class="a" style="left:675px;top:29px;width:1px;height:16px;background:#000;"></div>
<svg style="left:658px;top:29px;shape-rendering:crispEdges" width="18" height="16" viewBox="0 0 18 16"><rect x="5" y="10" width="6" height="2" fill="#000"/></svg>
<div class="a" style="left:676px;top:29px;width:18px;height:16px;background:#9aa0a8;"></div>
<div class="a" style="left:676px;top:29px;width:18px;height:1px;background:#d6d8e0;"></div>
<div class="a" style="left:676px;top:29px;width:1px;height:16px;background:#d6d8e0;"></div>
<div class="a" style="left:676px;top:44px;width:18px;height:1px;background:#000;"></div>
<div class="a" style="left:693px;top:29px;width:1px;height:16px;background:#000;"></div>
<svg style="left:676px;top:29px;shape-rendering:crispEdges" width="18" height="16" viewBox="0 0 18 16"><rect x="6" y="3" width="7" height="6" fill="#000"/><rect x="7" y="5" width="5" height="3" fill="#9aa0a8"/><rect x="4" y="6" width="7" height="7" fill="#000"/><rect x="5" y="8" width="5" height="4" fill="#9aa0a8"/></svg>
<div class="a" style="left:696px;top:29px;width:18px;height:16px;background:#9aa0a8;"></div>
<div class="a" style="left:696px;top:29px;width:18px;height:1px;background:#d6d8e0;"></div>
<div class="a" style="left:696px;top:29px;width:1px;height:16px;background:#d6d8e0;"></div>
<div class="a" style="left:696px;top:44px;width:18px;height:1px;background:#000;"></div>
<div class="a" style="left:713px;top:29px;width:1px;height:16px;background:#000;"></div>
<svg style="left:696px;top:29px;shape-rendering:crispEdges" width="18" height="16" viewBox="0 0 18 16"><path d="M5.5,4.5 L12.5,11.5 M12.5,4.5 L5.5,11.5" fill="none" stroke="#000" stroke-width="2" /></svg>
<div class="a" style="left:5px;top:48px;width:711px;height:1px;background:#5c6270;"></div>
<div class="a" style="left:5px;top:49px;width:711px;height:1px;background:#d6d8e0;"></div>
<div class="a" style="left:11px;top:53px;width:23px;height:23px;background:#9aa0a8;"></div>
<div class="a" style="left:11px;top:53px;width:23px;height:1px;background:#d6d8e0;"></div>
<div class="a" style="left:11px;top:53px;width:1px;height:23px;background:#d6d8e0;"></div>
<div class="a" style="left:11px;top:75px;width:23px;height:1px;background:#000;"></div>
<div class="a" style="left:33px;top:53px;width:1px;height:23px;background:#000;"></div>
<svg style="left:11px;top:53px;" width="23" height="23" viewBox="0 0 23 23"><path d="M6.5,3.5 H13.5 L16.5,6.5 V15.5 H6.5 Z" fill="#d2d4dc" stroke="#000" stroke-width="1" /><rect x="14" y="4" width="1" height="1" fill="#fff"/></svg>
<div class="a" style="left:34px;top:53px;width:23px;height:23px;background:#9aa0a8;"></div>
<div class="a" style="left:34px;top:53px;width:23px;height:1px;background:#d6d8e0;"></div>
<div class="a" style="left:34px;top:53px;width:1px;height:23px;background:#d6d8e0;"></div>
<div class="a" style="left:34px;top:75px;width:23px;height:1px;background:#000;"></div>
<div class="a" style="left:56px;top:53px;width:1px;height:23px;background:#000;"></div>
<svg style="left:34px;top:53px;" width="23" height="23" viewBox="0 0 23 23"><path d="M4.5,7.5 H8.5 L9.5,8.5 H13.5 V10.5 H8.5 L5.5,15.5 H4.5 Z" fill="#f0f000" stroke="#000" stroke-width="1" /><path d="M5.5,15.5 L8.5,10.5 H18.5 L15.5,15.5 Z" fill="#808000" stroke="#000" stroke-width="1" /><path d="M12.5,5.5 Q15,3 17.5,6.5" fill="none" stroke="#000" stroke-width="1" /><path d="M16,7 H19 V5 Z" fill="#000" stroke="none" stroke-width="1" /></svg>
<div class="a" style="left:57px;top:53px;width:23px;height:23px;background:#9aa0a8;"></div>
<div class="a" style="left:57px;top:53px;width:23px;height:1px;background:#d6d8e0;"></div>
<div class="a" style="left:57px;top:53px;width:1px;height:23px;background:#d6d8e0;"></div>
<div class="a" style="left:57px;top:75px;width:23px;height:1px;background:#000;"></div>
<div class="a" style="left:79px;top:53px;width:1px;height:23px;background:#000;"></div>
<svg style="left:57px;top:53px;" width="23" height="23" viewBox="0 0 23 23"><rect x="4" y="3" width="14" height="14" fill="#000"/><rect x="5" y="4" width="12" height="12" fill="#f00"/><rect x="7" y="4" width="8" height="6" fill="#d2d4dc"/><rect x="6" y="12" width="10" height="4" fill="#000"/><rect x="12" y="13" width="2" height="2" fill="#d2d4dc"/></svg>
<div class="a" style="left:88px;top:53px;width:23px;height:23px;background:#9aa0a8;"></div>
<div class="a" style="left:88px;top:53px;width:23px;height:1px;background:#d6d8e0;"></div>
<div class="a" style="left:88px;top:53px;width:1px;height:23px;background:#d6d8e0;"></div>
<div class="a" style="left:88px;top:75px;width:23px;height:1px;background:#000;"></div>
<div class="a" style="left:110px;top:53px;width:1px;height:23px;background:#000;"></div>
<svg style="left:88px;top:53px;" width="23" height="23" viewBox="0 0 23 23"><path d="M7.5,3.5 H16.5 L14.5,8.5 H5.5 Z" fill="#e8e8f0" stroke="#000" stroke-width="1" /><rect x="7" y="5" width="6" height="1" fill="#000"/><rect x="7" y="7" width="5" height="1" fill="#000"/><path d="M3.5,9.5 H15.5 L18.5,7.5 V14.5 L15.5,17.5 H4.5 L3.5,16.5 Z" fill="#00e8e8" stroke="#000" stroke-width="1" /><rect x="4" y="11" width="12" height="1" fill="#000"/><rect x="4" y="14" width="12" height="1" fill="#000"/><path d="M15.5,9.5 V17.5" fill="none" stroke="#000" stroke-width="1" /></svg>
<div class="a" style="left:119px;top:53px;width:23px;height:23px;background:#9aa0a8;"></div>
<div class="a" style="left:119px;top:53px;width:23px;height:1px;background:#d6d8e0;"></div>
<div class="a" style="left:119px;top:53px;width:1px;height:23px;background:#d6d8e0;"></div>
<div class="a" style="left:119px;top:75px;width:23px;height:1px;background:#000;"></div>
<div class="a" style="left:141px;top:53px;width:1px;height:23px;background:#000;"></div>
<svg style="left:119px;top:53px;" width="23" height="23" viewBox="0 0 23 23"><path d="M8.5,3.5 L11.5,10.5 M14.5,3.5 L11.5,10.5 M11.5,10.5 L9.5,13 M11.5,10.5 L13.5,13" fill="none" stroke="#646a74" stroke-width="1" /><path d="M8.5,14.5 m-2,0 a2,2.5 0 1,0 4,0 a2,2.5 0 1,0 -4,0" fill="none" stroke="#646a74" stroke-width="1" /><path d="M14.5,14.5 m-2,0 a2,2.5 0 1,0 4,0 a2,2.5 0 1,0 -4,0" fill="none" stroke="#646a74" stroke-width="1" /><path d="M9.5,18.5 H11.5 M13.5,18.5 H15.5" fill="none" stroke="#dcdee6" stroke-width="1" /></svg>
<div class="a" style="left:142px;top:53px;width:23px;height:23px;background:#9aa0a8;"></div>
<div class="a" style="left:142px;top:53px;width:23px;height:1px;background:#d6d8e0;"></div>
<div class="a" style="left:142px;top:53px;width:1px;height:23px;background:#d6d8e0;"></div>
<div class="a" style="left:142px;top:75px;width:23px;height:1px;background:#000;"></div>
<div class="a" style="left:164px;top:53px;width:1px;height:23px;background:#000;"></div>
<svg style="left:142px;top:53px;" width="23" height="23" viewBox="0 0 23 23"><path d="M4.5,3.5 H9.5 L11.5,5.5 V12.5 H4.5 Z" fill="none" stroke="#646a74" stroke-width="1" /><rect x="6" y="6" width="3" height="1" fill="#646a74"/><rect x="6" y="8" width="4" height="1" fill="#646a74"/><rect x="6" y="10" width="4" height="1" fill="#646a74"/><path d="M10.5,7.5 H15.5 L17.5,9.5 V16.5 H10.5 Z" fill="none" stroke="#646a74" stroke-width="1" /><rect x="12" y="10" width="3" height="1" fill="#646a74"/><rect x="12" y="12" width="4" height="1" fill="#646a74"/><rect x="12" y="14" width="4" height="1" fill="#646a74"/><path d="M5.5,13.5 H9.5 M11.5,17.5 H18.5 V10.5" fill="none" stroke="#dcdee6" stroke-width="1" /></svg>
<div class="a" style="left:165px;top:53px;width:23px;height:23px;background:#9aa0a8;"></div>
<div class="a" style="left:165px;top:53px;width:23px;height:1px;background:#d6d8e0;"></div>
<div class="a" style="left:165px;top:53px;width:1px;height:23px;background:#d6d8e0;"></div>
<div class="a" style="left:165px;top:75px;width:23px;height:1px;background:#000;"></div>
<div class="a" style="left:187px;top:53px;width:1px;height:23px;background:#000;"></div>
<svg style="left:165px;top:53px;" width="23" height="23" viewBox="0 0 23 23"><path d="M4.5,4.5 H14.5 Q15.5,4.5 15.5,6.5 V15.5 H4.5 Q3.5,15.5 3.5,13.5 V6.5 Q3.5,4.5 4.5,4.5 Z" fill="#646a74" stroke="none" stroke-width="1" /><rect x="8" y="3" width="4" height="2" fill="#646a74"/><rect x="7" y="6" width="5" height="1" fill="#dcdee6"/><path d="M10.5,10.5 H15.5 L17.5,12.5 V17.5 H10.5 Z" fill="#646a74" stroke="#dcdee6" stroke-width="1" /><rect x="12" y="13" width="3" height="1" fill="#dcdee6"/><rect x="12" y="15" width="4" height="1" fill="#dcdee6"/></svg>
<div class="a" style="left:196px;top:53px;width:23px;height:23px;background:#9aa0a8;"></div>
<div class="a" style="left:196px;top:53px;width:23px;height:1px;background:#d6d8e0;"></div>
<div class="a" style="left:196px;top:53px;width:1px;height:23px;background:#d6d8e0;"></div>
<div class="a" style="left:196px;top:75px;width:23px;height:1px;background:#000;"></div>
<div class="a" style="left:218px;top:53px;width:1px;height:23px;background:#000;"></div>
<svg style="left:196px;top:53px;" width="23" height="23" viewBox="0 0 23 23"><path d="M5,8 L10,13 H5 Z" fill="#646a74" stroke="none" stroke-width="1" /><path d="M8.5,9.5 Q12,6 15.5,8.5 Q17.5,11 15.5,14.5" fill="none" stroke="#646a74" stroke-width="1" /><path d="M5.5,14.5 H10.5 M16.5,12.5 L15.5,15.5" fill="none" stroke="#dcdee6" stroke-width="1" /></svg>
<div class="a" style="left:219px;top:53px;width:23px;height:23px;background:#9aa0a8;"></div>
<div class="a" style="left:219px;top:53px;width:23px;height:1px;background:#d6d8e0;"></div>
<div class="a" style="left:219px;top:53px;width:1px;height:23px;background:#d6d8e0;"></div>
<div class="a" style="left:219px;top:75px;width:23px;height:1px;background:#000;"></div>
<div class="a" style="left:241px;top:53px;width:1px;height:23px;background:#000;"></div>
<svg style="left:219px;top:53px;" width="23" height="23" viewBox="0 0 23 23"><path d="M18,8 L13,13 H18 Z" fill="#646a74" stroke="none" stroke-width="1" /><path d="M14.5,9.5 Q11,6 7.5,8.5 Q5.5,11 7.5,14.5" fill="none" stroke="#646a74" stroke-width="1" /><path d="M12.5,14.5 H18.5 V8.5 M7.5,15.5 L8.5,12.5" fill="none" stroke="#dcdee6" stroke-width="1" /></svg>
<div class="a" style="left:250px;top:53px;width:23px;height:23px;background:#9aa0a8;"></div>
<div class="a" style="left:250px;top:53px;width:23px;height:1px;background:#d6d8e0;"></div>
<div class="a" style="left:250px;top:53px;width:1px;height:23px;background:#d6d8e0;"></div>
<div class="a" style="left:250px;top:75px;width:23px;height:1px;background:#000;"></div>
<div class="a" style="left:272px;top:53px;width:1px;height:23px;background:#000;"></div>
<svg style="left:250px;top:53px;" width="23" height="23" viewBox="0 0 23 23"><path d="M3,4 L6,2 L14,10 L11,13 Z" fill="#f0f000" stroke="#000" stroke-width="1" /><path d="M11,13 L14,10 L15,12 L13,15 Z" fill="#00f0f0" stroke="#000" stroke-width="1" /><rect x="3" y="17" width="8" height="2" fill="#0000ff"/><path d="M10.5,17 Q13.5,16 14,13" fill="none" stroke="#0000ff" stroke-width="2" /><rect x="14" y="17" width="5" height="1" fill="#0000ff"/></svg>
<div class="a" style="left:273px;top:53px;width:23px;height:23px;background:#9aa0a8;"></div>
<div class="a" style="left:273px;top:53px;width:23px;height:1px;background:#d6d8e0;"></div>
<div class="a" style="left:273px;top:53px;width:1px;height:23px;background:#d6d8e0;"></div>
<div class="a" style="left:273px;top:75px;width:23px;height:1px;background:#000;"></div>
<div class="a" style="left:295px;top:53px;width:1px;height:23px;background:#000;"></div>
<svg style="left:273px;top:53px;" width="23" height="23" viewBox="0 0 23 23"><path d="M9,8.5 m-6,0 a6,6 0 1,0 12,0 a6,6 0 1,0 -12,0" fill="none" stroke="#000" stroke-width="1" stroke-dasharray="2,1"/><rect x="5" y="7" width="8" height="3" fill="#0000ff"/><rect x="7.5" y="4.5" width="3" height="8" fill="#0000ff"/><path d="M13,13 L18.5,18.5" fill="none" stroke="#000" stroke-width="3.2" /><path d="M13.6,13.6 L17.8,17.8" fill="none" stroke="#f0f000" stroke-width="1.3" /></svg>
<div class="a" style="left:296px;top:53px;width:23px;height:23px;background:#9aa0a8;"></div>
<div class="a" style="left:296px;top:53px;width:23px;height:1px;background:#d6d8e0;"></div>
<div class="a" style="left:296px;top:53px;width:1px;height:23px;background:#d6d8e0;"></div>
<div class="a" style="left:296px;top:75px;width:23px;height:1px;background:#000;"></div>
<div class="a" style="left:318px;top:53px;width:1px;height:23px;background:#000;"></div>
<svg style="left:296px;top:53px;" width="23" height="23" viewBox="0 0 23 23"><path d="M8,8.5 m-6,0 a6,6 0 1,0 12,0 a6,6 0 1,0 -12,0" fill="none" stroke="#000" stroke-width="1" stroke-dasharray="2,1"/><rect x="6" y="8" width="4" height="2" fill="#0000ff"/><path d="M12,13 L17.5,18.5" fill="none" stroke="#000" stroke-width="3.2" /><path d="M12.6,13.6 L16.8,17.8" fill="none" stroke="#f0f000" stroke-width="1.3" /></svg>
<div class="a" style="left:319px;top:53px;width:23px;height:23px;background:#9aa0a8;"></div>
<div class="a" style="left:319px;top:53px;width:23px;height:1px;background:#d6d8e0;"></div>
<div class="a" style="left:319px;top:53px;width:1px;height:23px;background:#d6d8e0;"></div>
<div class="a" style="left:319px;top:75px;width:23px;height:1px;background:#000;"></div>
<div class="a" style="left:341px;top:53px;width:1px;height:23px;background:#000;"></div>
<svg style="left:319px;top:53px;" width="23" height="23" viewBox="0 0 23 23"><rect x="4" y="15" width="15" height="3" fill="#000"/><rect x="5" y="15" width="13" height="2" fill="#e8e8f0"/><rect x="13" y="5" width="5" height="12" fill="#000"/><rect x="14" y="6" width="3" height="10" fill="#d8d8e0"/><path d="M8,9 m-6,0 a6,6 0 1,0 12,0 a6,6 0 1,0 -12,0" fill="#e8e8ee" stroke="#000" stroke-width="1" /><rect x="5" y="6" width="6" height="6" fill="#0000ff"/><rect x="6" y="7" width="4" height="4" fill="#d2d4dc"/><path d="M12,13 L17.5,18.5" fill="none" stroke="#000" stroke-width="3.2" /><path d="M12.6,13.6 L16.8,17.8" fill="none" stroke="#f0f000" stroke-width="1.3" /></svg>
<div class="a" style="left:342px;top:53px;width:23px;height:23px;background:#9aa0a8;"></div>
<div class="a" style="left:342px;top:53px;width:23px;height:1px;background:#d6d8e0;"></div>
<div class="a" style="left:342px;top:53px;width:1px;height:23px;background:#d6d8e0;"></div>
<div class="a" style="left:342px;top:75px;width:23px;height:1px;background:#000;"></div>
<div class="a" style="left:364px;top:53px;width:1px;height:23px;background:#000;"></div>
<svg style="left:342px;top:53px;" width="23" height="23" viewBox="0 0 23 23"><path d="M8,8.5 m-6,0 a6,6 0 1,0 12,0 a6,6 0 1,0 -12,0" fill="none" stroke="#000" stroke-width="1" stroke-dasharray="2,1"/><rect x="5" y="5" width="7" height="7" fill="#d4d4dc"/><path d="M12,13 L17.5,18.5" fill="none" stroke="#000" stroke-width="3.2" /><path d="M12.6,13.6 L16.8,17.8" fill="none" stroke="#f0f000" stroke-width="1.3" /></svg>
<div class="a" style="left:379px;top:53px;width:23px;height:23px;background:#9aa0a8;"></div>
<div class="a" style="left:379px;top:53px;width:23px;height:1px;background:#d6d8e0;"></div>
<div class="a" style="left:379px;top:53px;width:1px;height:23px;background:#d6d8e0;"></div>
<div class="a" style="left:379px;top:75px;width:23px;height:1px;background:#000;"></div>
<div class="a" style="left:401px;top:53px;width:1px;height:23px;background:#000;"></div>
<svg style="left:379px;top:53px;" width="23" height="23" viewBox="0 0 23 23"><rect x="3" y="4" width="15" height="1" fill="#000"/><path d="M4,5 L9,7 L17,15 L15,17 L7,9 Z" fill="#f0f000" stroke="#000" stroke-width="1" /><path d="M4,5 L9,7 L7,9 Z" fill="#e0e0e8" stroke="#000" stroke-width="1" /><path d="M9.5,9.5 L16,16" fill="none" stroke="#000" stroke-width="1" /></svg>
<div class="a" style="left:402px;top:53px;width:23px;height:23px;background:#9aa0a8;"></div>
<div class="a" style="left:402px;top:53px;width:23px;height:1px;background:#d6d8e0;"></div>
<div class="a" style="left:402px;top:53px;width:1px;height:23px;background:#d6d8e0;"></div>
<div class="a" style="left:402px;top:75px;width:23px;height:1px;background:#000;"></div>
<div class="a" style="left:424px;top:53px;width:1px;height:23px;background:#000;"></div>
<svg style="left:402px;top:53px;" width="23" height="23" viewBox="0 0 23 23"><rect x="3" y="3" width="16" height="3" fill="#000"/><path d="M4,5 L9,7 L17,15 L15,17 L7,9 Z" fill="#f0f000" stroke="#000" stroke-width="1" /><path d="M4,5 L9,7 L7,9 Z" fill="#e0e0e8" stroke="#000" stroke-width="1" /><path d="M9.5,9.5 L16,16" fill="none" stroke="#000" stroke-width="1" /></svg>
<div class="a" style="left:425px;top:53px;width:23px;height:23px;background:#9aa0a8;"></div>
<div class="a" style="left:425px;top:53px;width:23px;height:1px;background:#d6d8e0;"></div>
<div class="a" style="left:425px;top:53px;width:1px;height:23px;background:#d6d8e0;"></div>
<div class="a" style="left:425px;top:75px;width:23px;height:1px;background:#000;"></div>
<div class="a" style="left:447px;top:53px;width:1px;height:23px;background:#000;"></div>
<svg style="left:425px;top:53px;" width="23" height="23" viewBox="0 0 23 23"><rect x="5" y="3" width="12" height="15" fill="#000"/><rect x="6" y="4" width="10" height="13" fill="#d2d4dc"/><rect x="2" y="6" width="4" height="1" fill="#0000ff"/><rect x="6" y="6" width="2" height="1" fill="#9aa0a8"/><rect x="2" y="10" width="4" height="1" fill="#0000ff"/><rect x="6" y="10" width="2" height="1" fill="#9aa0a8"/><rect x="2" y="14" width="4" height="1" fill="#0000ff"/><rect x="6" y="14" width="2" height="1" fill="#9aa0a8"/><rect x="16" y="8" width="3" height="1" fill="#0000ff"/><rect x="14" y="8" width="2" height="1" fill="#9aa0a8"/><rect x="16" y="12" width="3" height="1" fill="#0000ff"/><rect x="14" y="12" width="2" height="1" fill="#9aa0a8"/></svg>
<div class="a" style="left:448px;top:53px;width:23px;height:23px;background:#9aa0a8;"></div>
<div class="a" style="left:448px;top:53px;width:23px;height:1px;background:#d6d8e0;"></div>
<div class="a" style="left:448px;top:53px;width:1px;height:23px;background:#d6d8e0;"></div>
<div class="a" style="left:448px;top:75px;width:23px;height:1px;background:#000;"></div>
<div class="a" style="left:470px;top:53px;width:1px;height:23px;background:#000;"></div>
<svg style="left:448px;top:53px;" width="23" height="23" viewBox="0 0 23 23"><path d="M4.5,3.5 H10.5 L13.5,6.5 V10.5 L11.5,12.5 H4.5 Z" fill="#d2d4dc" stroke="#000" stroke-width="1" /><rect x="2" y="5" width="3" height="1" fill="#000"/><rect x="2" y="9" width="3" height="1" fill="#000"/><rect x="13" y="7" width="3" height="1" fill="#000"/><rect x="8" y="8" width="3" height="10" fill="#000"/><rect x="14" y="8" width="3" height="10" fill="#000"/><rect x="10" y="10" width="5" height="4" fill="#000"/><rect x="7" y="14" width="4" height="4" fill="#000"/><rect x="13" y="14" width="5" height="4" fill="#000"/><rect x="8" y="15" width="1" height="1" fill="#d2d4dc"/><rect x="15" y="15" width="1" height="1" fill="#d2d4dc"/></svg>
<div class="a" style="left:637px;top:53px;width:23px;height:23px;background:#9aa0a8;"></div>
<div class="a" style="left:637px;top:53px;width:23px;height:1px;background:#d6d8e0;"></div>
<div class="a" style="left:637px;top:53px;width:1px;height:23px;background:#d6d8e0;"></div>
<div class="a" style="left:637px;top:75px;width:23px;height:1px;background:#000;"></div>
<div class="a" style="left:659px;top:53px;width:1px;height:23px;background:#000;"></div>
<svg style="left:637px;top:53px;" width="23" height="23" viewBox="0 0 23 23"><path d="M6.5,4.5 H19.5 V17.5 H6.5 L2.5,12 V10 Z" fill="#646a74" stroke="none" stroke-width="1" /><rect x="7" y="6" width="1" height="1" fill="#b8bcc4"/><rect x="9" y="6" width="1" height="1" fill="#b8bcc4"/><rect x="11" y="6" width="1" height="1" fill="#b8bcc4"/><rect x="13" y="6" width="1" height="1" fill="#b8bcc4"/><rect x="15" y="6" width="1" height="1" fill="#b8bcc4"/><rect x="17" y="6" width="1" height="1" fill="#b8bcc4"/><rect x="7" y="8" width="1" height="1" fill="#b8bcc4"/><rect x="9" y="8" width="1" height="1" fill="#b8bcc4"/><rect x="11" y="8" width="1" height="1" fill="#b8bcc4"/><rect x="13" y="8" width="1" height="1" fill="#b8bcc4"/><rect x="15" y="8" width="1" height="1" fill="#b8bcc4"/><rect x="17" y="8" width="1" height="1" fill="#b8bcc4"/><rect x="7" y="10" width="1" height="1" fill="#b8bcc4"/><rect x="9" y="10" width="1" height="1" fill="#b8bcc4"/><rect x="11" y="10" width="1" height="1" fill="#b8bcc4"/><rect x="13" y="10" width="1" height="1" fill="#b8bcc4"/><rect x="15" y="10" width="1" height="1" fill="#b8bcc4"/><rect x="17" y="10" width="1" height="1" fill="#b8bcc4"/><rect x="7" y="12" width="1" height="1" fill="#b8bcc4"/><rect x="9" y="12" width="1" height="1" fill="#b8bcc4"/><rect x="11" y="12" width="1" height="1" fill="#b8bcc4"/><rect x="13" y="12" width="1" height="1" fill="#b8bcc4"/><rect x="15" y="12" width="1" height="1" fill="#b8bcc4"/><rect x="17" y="12" width="1" height="1" fill="#b8bcc4"/><rect x="7" y="14" width="1" height="1" fill="#b8bcc4"/><rect x="9" y="14" width="1" height="1" fill="#b8bcc4"/><rect x="11" y="14" width="1" height="1" fill="#b8bcc4"/><rect x="13" y="14" width="1" height="1" fill="#b8bcc4"/><rect x="15" y="14" width="1" height="1" fill="#b8bcc4"/><rect x="17" y="14" width="1" height="1" fill="#b8bcc4"/><rect x="7" y="16" width="1" height="1" fill="#b8bcc4"/><rect x="9" y="16" width="1" height="1" fill="#b8bcc4"/><rect x="11" y="16" width="1" height="1" fill="#b8bcc4"/><rect x="13" y="16" width="1" height="1" fill="#b8bcc4"/><rect x="15" y="16" width="1" height="1" fill="#b8bcc4"/><rect x="17" y="16" width="1" height="1" fill="#b8bcc4"/><path d="M7.5,18.5 H20.5 V5.5" fill="none" stroke="#dcdee6" stroke-width="1" /></svg>
<div class="a" style="left:660px;top:53px;width:23px;height:23px;background:#9aa0a8;"></div>
<div class="a" style="left:660px;top:53px;width:23px;height:1px;background:#d6d8e0;"></div>
<div class="a" style="left:660px;top:53px;width:1px;height:23px;background:#d6d8e0;"></div>
<div class="a" style="left:660px;top:75px;width:23px;height:1px;background:#000;"></div>
<div class="a" style="left:682px;top:53px;width:1px;height:23px;background:#000;"></div>
<svg style="left:660px;top:53px;" width="23" height="23" viewBox="0 0 23 23"><path d="M4.5,8.5 H8.5 L10.5,10 V15 L7,17.5 H5.5 L4.5,16.5 Z" fill="#e8e8f0" stroke="#000" stroke-width="1" /><path d="M7,15 L14.5,12 L16.5,13.5 L12.5,17.5 H7 Z" fill="#f0f0f8" stroke="#000" stroke-width="1" /><path d="M9,12 L17,3.5 L19,5.5 L11,14 Z" fill="#ff0000" stroke="#000" stroke-width="1" /><path d="M10.5,11.5 L17.5,4.5" fill="none" stroke="#fff" stroke-width="1" /><rect x="2" y="9" width="3" height="1" fill="#000"/><rect x="16" y="12" width="3" height="1" fill="#000"/></svg>
<div class="a" style="left:479px;top:53px;width:149px;height:23px;background:#fff;"></div>
<div class="a" style="left:479px;top:53px;width:149px;height:1px;background:#5c6270;"></div>
<div class="a" style="left:479px;top:53px;width:1px;height:23px;background:#5c6270;"></div>
<div class="a" style="left:479px;top:75px;width:149px;height:1px;background:#d6d8e0;"></div>
<div class="a" style="left:627px;top:53px;width:1px;height:23px;background:#d6d8e0;"></div>
<div class="a" style="left:480px;top:54px;width:147px;height:1px;background:#000;"></div>
<div class="a" style="left:480px;top:54px;width:1px;height:21px;background:#000;"></div>
<div class="t" style="left:484.5px;top:58.60px;font-size:13px;color:#000;font-weight:bold;font-style:normal;">stub</div>
<div class="a" style="left:614px;top:55px;width:13px;height:19px;background:#9aa0a8;"></div>
<div class="a" style="left:614px;top:55px;width:13px;height:1px;background:#d6d8e0;"></div>
<div class="a" style="left:614px;top:55px;width:1px;height:19px;background:#d6d8e0;"></div>
<div class="a" style="left:614px;top:73px;width:13px;height:1px;background:#000;"></div>
<div class="a" style="left:626px;top:55px;width:1px;height:19px;background:#000;"></div>
<svg style="left:614px;top:55px;" width="13" height="19" viewBox="0 0 13 19"><path d="M3,8 H10 L6.5,12 Z" fill="#000" stroke="none" stroke-width="1" /></svg>
<div class="a" style="left:372px;top:52px;width:1px;height:25px;background:#5c6270;"></div>
<div class="a" style="left:373px;top:52px;width:1px;height:25px;background:#d6d8e0;"></div>
<div class="a" style="left:689px;top:52px;width:1px;height:25px;background:#5c6270;"></div>
<div class="a" style="left:690px;top:52px;width:1px;height:25px;background:#d6d8e0;"></div>
<div class="a" style="left:697px;top:53px;width:19px;height:1px;background:#d6d8e0;"></div>
<div class="a" style="left:697px;top:53px;width:1px;height:22px;background:#d6d8e0;"></div>
<div class="a" style="left:697px;top:75px;width:19px;height:1px;background:#000;"></div>
<svg style="left:697px;top:53px;" width="19" height="23" viewBox="0 0 19 23"><rect x="3" y="3" width="16" height="16" fill="#000"/><rect x="4" y="4" width="14" height="14" fill="#9aa0a8"/><rect x="4" y="4" width="14" height="3" fill="#0000ff"/><rect x="4" y="7" width="14" height="1" fill="#000"/><rect x="5" y="9" width="3" height="3" fill="#646a74"/><rect x="7" y="10" width="1" height="2" fill="#dcdee6"/><rect x="10" y="9" width="7" height="1" fill="#dcdee6"/><rect x="10" y="11" width="7" height="1" fill="#646a74"/><rect x="5" y="13" width="3" height="3" fill="#646a74"/><rect x="7" y="14" width="1" height="2" fill="#dcdee6"/><rect x="10" y="13" width="7" height="1" fill="#dcdee6"/><rect x="10" y="15" width="7" height="1" fill="#646a74"/></svg>
<div class="a" style="left:35px;top:80px;width:679px;height:1px;background:#000;"></div>
<div class="a" style="left:35px;top:80px;width:1px;height:500px;background:#000;"></div>
<div class="a" style="left:714px;top:80px;width:1px;height:502px;background:#d6d8e0;"></div>
<div class="a" style="left:36px;top:81px;width:665px;height:486px;background:#fff;"></div>
<svg style="left:0;top:0" width="1020" height="604" viewBox="0 0 1020 604"><g font-family="Liberation Sans"><clipPath id="cc"><rect x="36" y="81" width="665" height="486"/></clipPath><g clip-path="url(#cc)"><rect x="36" y="94" width="1" height="1" fill="#808080"/>
<rect x="36" y="119" width="1" height="1" fill="#808080"/>
<rect x="36" y="145" width="1" height="1" fill="#808080"/>
<rect x="36" y="171" width="1" height="1" fill="#808080"/>
<rect x="36" y="196" width="1" height="1" fill="#808080"/>
<rect x="36" y="222" width="1" height="1" fill="#808080"/>
<rect x="36" y="247" width="1" height="1" fill="#808080"/>
<rect x="36" y="273" width="1" height="1" fill="#808080"/>
<rect x="36" y="299" width="1" height="1" fill="#808080"/>
<rect x="36" y="324" width="1" height="1" fill="#808080"/>
<rect x="36" y="350" width="1" height="1" fill="#808080"/>
<rect x="36" y="375" width="1" height="1" fill="#808080"/>
<rect x="36" y="401" width="1" height="1" fill="#808080"/>
<rect x="36" y="427" width="1" height="1" fill="#808080"/>
<rect x="36" y="452" width="1" height="1" fill="#808080"/>
<rect x="36" y="478" width="1" height="1" fill="#808080"/>
<rect x="36" y="503" width="1" height="1" fill="#808080"/>
<rect x="36" y="529" width="1" height="1" fill="#808080"/>
<rect x="36" y="555" width="1" height="1" fill="#808080"/>
<rect x="62" y="94" width="1" height="1" fill="#808080"/>
<rect x="62" y="119" width="1" height="1" fill="#808080"/>
<rect x="62" y="145" width="1" height="1" fill="#808080"/>
<rect x="62" y="171" width="1" height="1" fill="#808080"/>
<rect x="62" y="196" width="1" height="1" fill="#808080"/>
<rect x="62" y="222" width="1" height="1" fill="#808080"/>
<rect x="62" y="247" width="1" height="1" fill="#808080"/>
<rect x="62" y="273" width="1" height="1" fill="#808080"/>
<rect x="62" y="299" width="1" height="1" fill="#808080"/>
<rect x="62" y="324" width="1" height="1" fill="#808080"/>
<rect x="62" y="350" width="1" height="1" fill="#808080"/>
<rect x="62" y="375" width="1" height="1" fill="#808080"/>
<rect x="62" y="401" width="1" height="1" fill="#808080"/>
<rect x="62" y="427" width="1" height="1" fill="#808080"/>
<rect x="62" y="452" width="1" height="1" fill="#808080"/>
<rect x="62" y="478" width="1" height="1" fill="#808080"/>
<rect x="62" y="503" width="1" height="1" fill="#808080"/>
<rect x="62" y="529" width="1" height="1" fill="#808080"/>
<rect x="62" y="555" width="1" height="1" fill="#808080"/>
<rect x="87" y="94" width="1" height="1" fill="#808080"/>
<rect x="87" y="119" width="1" height="1" fill="#808080"/>
<rect x="87" y="145" width="1" height="1" fill="#808080"/>
<rect x="87" y="171" width="1" height="1" fill="#808080"/>
<rect x="87" y="196" width="1" height="1" fill="#808080"/>
<rect x="87" y="222" width="1" height="1" fill="#808080"/>
<rect x="87" y="247" width="1" height="1" fill="#808080"/>
<rect x="87" y="273" width="1" height="1" fill="#808080"/>
<rect x="87" y="299" width="1" height="1" fill="#808080"/>
<rect x="87" y="324" width="1" height="1" fill="#808080"/>
<rect x="87" y="350" width="1" height="1" fill="#808080"/>
<rect x="87" y="375" width="1" height="1" fill="#808080"/>
<rect x="87" y="401" width="1" height="1" fill="#808080"/>
<rect x="87" y="427" width="1" height="1" fill="#808080"/>
<rect x="87" y="452" width="1" height="1" fill="#808080"/>
<rect x="87" y="478" width="1" height="1" fill="#808080"/>
<rect x="87" y="503" width="1" height="1" fill="#808080"/>
<rect x="87" y="529" width="1" height="1" fill="#808080"/>
<rect x="87" y="555" width="1" height="1" fill="#808080"/>
<rect x="113" y="94" width="1" height="1" fill="#808080"/>
<rect x="113" y="119" width="1" height="1" fill="#808080"/>
<rect x="113" y="145" width="1" height="1" fill="#808080"/>
<rect x="113" y="171" width="1" height="1" fill="#808080"/>
<rect x="113" y="196" width="1" height="1" fill="#808080"/>
<rect x="113" y="222" width="1" height="1" fill="#808080"/>
<rect x="113" y="247" width="1" height="1" fill="#808080"/>
<rect x="113" y="273" width="1" height="1" fill="#808080"/>
<rect x="113" y="299" width="1" height="1" fill="#808080"/>
<rect x="113" y="324" width="1" height="1" fill="#808080"/>
<rect x="113" y="350" width="1" height="1" fill="#808080"/>
<rect x="113" y="375" width="1" height="1" fill="#808080"/>
<rect x="113" y="401" width="1" height="1" fill="#808080"/>
<rect x="113" y="427" width="1" height="1" fill="#808080"/>
<rect x="113" y="452" width="1" height="1" fill="#808080"/>
<rect x="113" y="478" width="1" height="1" fill="#808080"/>
<rect x="113" y="503" width="1" height="1" fill="#808080"/>
<rect x="113" y="529" width="1" height="1" fill="#808080"/>
<rect x="113" y="555" width="1" height="1" fill="#808080"/>
<rect x="138" y="94" width="1" height="1" fill="#808080"/>
<rect x="138" y="119" width="1" height="1" fill="#808080"/>
<rect x="138" y="145" width="1" height="1" fill="#808080"/>
<rect x="138" y="171" width="1" height="1" fill="#808080"/>
<rect x="138" y="196" width="1" height="1" fill="#808080"/>
<rect x="138" y="222" width="1" height="1" fill="#808080"/>
<rect x="138" y="247" width="1" height="1" fill="#808080"/>
<rect x="138" y="273" width="1" height="1" fill="#808080"/>
<rect x="138" y="299" width="1" height="1" fill="#808080"/>
<rect x="138" y="324" width="1" height="1" fill="#808080"/>
<rect x="138" y="350" width="1" height="1" fill="#808080"/>
<rect x="138" y="375" width="1" height="1" fill="#808080"/>
<rect x="138" y="401" width="1" height="1" fill="#808080"/>
<rect x="138" y="427" width="1" height="1" fill="#808080"/>
<rect x="138" y="452" width="1" height="1" fill="#808080"/>
<rect x="138" y="478" width="1" height="1" fill="#808080"/>
<rect x="138" y="503" width="1" height="1" fill="#808080"/>
<rect x="138" y="529" width="1" height="1" fill="#808080"/>
<rect x="138" y="555" width="1" height="1" fill="#808080"/>
<rect x="164" y="94" width="1" height="1" fill="#808080"/>
<rect x="164" y="119" width="1" height="1" fill="#808080"/>
<rect x="164" y="145" width="1" height="1" fill="#808080"/>
<rect x="164" y="171" width="1" height="1" fill="#808080"/>
<rect x="164" y="196" width="1" height="1" fill="#808080"/>
<rect x="164" y="222" width="1" height="1" fill="#808080"/>
<rect x="164" y="247" width="1" height="1" fill="#808080"/>
<rect x="164" y="273" width="1" height="1" fill="#808080"/>
<rect x="164" y="299" width="1" height="1" fill="#808080"/>
<rect x="164" y="324" width="1" height="1" fill="#808080"/>
<rect x="164" y="350" width="1" height="1" fill="#808080"/>
<rect x="164" y="375" width="1" height="1" fill="#808080"/>
<rect x="164" y="401" width="1" height="1" fill="#808080"/>
<rect x="164" y="427" width="1" height="1" fill="#808080"/>
<rect x="164" y="452" width="1" height="1" fill="#808080"/>
<rect x="164" y="478" width="1" height="1" fill="#808080"/>
<rect x="164" y="503" width="1" height="1" fill="#808080"/>
<rect x="164" y="529" width="1" height="1" fill="#808080"/>
<rect x="164" y="555" width="1" height="1" fill="#808080"/>
<rect x="190" y="94" width="1" height="1" fill="#808080"/>
<rect x="190" y="119" width="1" height="1" fill="#808080"/>
<rect x="190" y="145" width="1" height="1" fill="#808080"/>
<rect x="190" y="171" width="1" height="1" fill="#808080"/>
<rect x="190" y="196" width="1" height="1" fill="#808080"/>
<rect x="190" y="222" width="1" height="1" fill="#808080"/>
<rect x="190" y="247" width="1" height="1" fill="#808080"/>
<rect x="190" y="273" width="1" height="1" fill="#808080"/>
<rect x="190" y="299" width="1" height="1" fill="#808080"/>
<rect x="190" y="324" width="1" height="1" fill="#808080"/>
<rect x="190" y="350" width="1" height="1" fill="#808080"/>
<rect x="190" y="375" width="1" height="1" fill="#808080"/>
<rect x="190" y="401" width="1" height="1" fill="#808080"/>
<rect x="190" y="427" width="1" height="1" fill="#808080"/>
<rect x="190" y="452" width="1" height="1" fill="#808080"/>
<rect x="190" y="478" width="1" height="1" fill="#808080"/>
<rect x="190" y="503" width="1" height="1" fill="#808080"/>
<rect x="190" y="529" width="1" height="1" fill="#808080"/>
<rect x="190" y="555" width="1" height="1" fill="#808080"/>
<rect x="215" y="94" width="1" height="1" fill="#808080"/>
<rect x="215" y="119" width="1" height="1" fill="#808080"/>
<rect x="215" y="145" width="1" height="1" fill="#808080"/>
<rect x="215" y="171" width="1" height="1" fill="#808080"/>
<rect x="215" y="196" width="1" height="1" fill="#808080"/>
<rect x="215" y="222" width="1" height="1" fill="#808080"/>
<rect x="215" y="247" width="1" height="1" fill="#808080"/>
<rect x="215" y="273" width="1" height="1" fill="#808080"/>
<rect x="215" y="299" width="1" height="1" fill="#808080"/>
<rect x="215" y="324" width="1" height="1" fill="#808080"/>
<rect x="215" y="350" width="1" height="1" fill="#808080"/>
<rect x="215" y="375" width="1" height="1" fill="#808080"/>
<rect x="215" y="401" width="1" height="1" fill="#808080"/>
<rect x="215" y="427" width="1" height="1" fill="#808080"/>
<rect x="215" y="452" width="1" height="1" fill="#808080"/>
<rect x="215" y="478" width="1" height="1" fill="#808080"/>
<rect x="215" y="503" width="1" height="1" fill="#808080"/>
<rect x="215" y="529" width="1" height="1" fill="#808080"/>
<rect x="215" y="555" width="1" height="1" fill="#808080"/>
<rect x="241" y="94" width="1" height="1" fill="#808080"/>
<rect x="241" y="119" width="1" height="1" fill="#808080"/>
<rect x="241" y="145" width="1" height="1" fill="#808080"/>
<rect x="241" y="171" width="1" height="1" fill="#808080"/>
<rect x="241" y="196" width="1" height="1" fill="#808080"/>
<rect x="241" y="222" width="1" height="1" fill="#808080"/>
<rect x="241" y="247" width="1" height="1" fill="#808080"/>
<rect x="241" y="273" width="1" height="1" fill="#808080"/>
<rect x="241" y="299" width="1" height="1" fill="#808080"/>
<rect x="241" y="324" width="1" height="1" fill="#808080"/>
<rect x="241" y="350" width="1" height="1" fill="#808080"/>
<rect x="241" y="375" width="1" height="1" fill="#808080"/>
<rect x="241" y="401" width="1" height="1" fill="#808080"/>
<rect x="241" y="427" width="1" height="1" fill="#808080"/>
<rect x="241" y="452" width="1" height="1" fill="#808080"/>
<rect x="241" y="478" width="1" height="1" fill="#808080"/>
<rect x="241" y="503" width="1" height="1" fill="#808080"/>
<rect x="241" y="529" width="1" height="1" fill="#808080"/>
<rect x="241" y="555" width="1" height="1" fill="#808080"/>
<rect x="266" y="94" width="1" height="1" fill="#808080"/>
<rect x="266" y="119" width="1" height="1" fill="#808080"/>
<rect x="266" y="145" width="1" height="1" fill="#808080"/>
<rect x="266" y="171" width="1" height="1" fill="#808080"/>
<rect x="266" y="196" width="1" height="1" fill="#808080"/>
<rect x="266" y="222" width="1" height="1" fill="#808080"/>
<rect x="266" y="247" width="1" height="1" fill="#808080"/>
<rect x="266" y="273" width="1" height="1" fill="#808080"/>
<rect x="266" y="299" width="1" height="1" fill="#808080"/>
<rect x="266" y="324" width="1" height="1" fill="#808080"/>
<rect x="266" y="350" width="1" height="1" fill="#808080"/>
<rect x="266" y="375" width="1" height="1" fill="#808080"/>
<rect x="266" y="401" width="1" height="1" fill="#808080"/>
<rect x="266" y="427" width="1" height="1" fill="#808080"/>
<rect x="266" y="452" width="1" height="1" fill="#808080"/>
<rect x="266" y="478" width="1" height="1" fill="#808080"/>
<rect x="266" y="503" width="1" height="1" fill="#808080"/>
<rect x="266" y="529" width="1" height="1" fill="#808080"/>
<rect x="266" y="555" width="1" height="1" fill="#808080"/>
<rect x="292" y="94" width="1" height="1" fill="#808080"/>
<rect x="292" y="119" width="1" height="1" fill="#808080"/>
<rect x="292" y="145" width="1" height="1" fill="#808080"/>
<rect x="292" y="171" width="1" height="1" fill="#808080"/>
<rect x="292" y="196" width="1" height="1" fill="#808080"/>
<rect x="292" y="222" width="1" height="1" fill="#808080"/>
<rect x="292" y="247" width="1" height="1" fill="#808080"/>
<rect x="292" y="273" width="1" height="1" fill="#808080"/>
<rect x="292" y="299" width="1" height="1" fill="#808080"/>
<rect x="292" y="324" width="1" height="1" fill="#808080"/>
<rect x="292" y="350" width="1" height="1" fill="#808080"/>
<rect x="292" y="375" width="1" height="1" fill="#808080"/>
<rect x="292" y="401" width="1" height="1" fill="#808080"/>
<rect x="292" y="427" width="1" height="1" fill="#808080"/>
<rect x="292" y="452" width="1" height="1" fill="#808080"/>
<rect x="292" y="478" width="1" height="1" fill="#808080"/>
<rect x="292" y="503" width="1" height="1" fill="#808080"/>
<rect x="292" y="529" width="1" height="1" fill="#808080"/>
<rect x="292" y="555" width="1" height="1" fill="#808080"/>
<rect x="318" y="94" width="1" height="1" fill="#808080"/>
<rect x="318" y="119" width="1" height="1" fill="#808080"/>
<rect x="318" y="145" width="1" height="1" fill="#808080"/>
<rect x="318" y="171" width="1" height="1" fill="#808080"/>
<rect x="318" y="196" width="1" height="1" fill="#808080"/>
<rect x="318" y="222" width="1" height="1" fill="#808080"/>
<rect x="318" y="247" width="1" height="1" fill="#808080"/>
<rect x="318" y="273" width="1" height="1" fill="#808080"/>
<rect x="318" y="299" width="1" height="1" fill="#808080"/>
<rect x="318" y="324" width="1" height="1" fill="#808080"/>
<rect x="318" y="350" width="1" height="1" fill="#808080"/>
<rect x="318" y="375" width="1" height="1" fill="#808080"/>
<rect x="318" y="401" width="1" height="1" fill="#808080"/>
<rect x="318" y="427" width="1" height="1" fill="#808080"/>
<rect x="318" y="452" width="1" height="1" fill="#808080"/>
<rect x="318" y="478" width="1" height="1" fill="#808080"/>
<rect x="318" y="503" width="1" height="1" fill="#808080"/>
<rect x="318" y="529" width="1" height="1" fill="#808080"/>
<rect x="318" y="555" width="1" height="1" fill="#808080"/>
<rect x="343" y="94" width="1" height="1" fill="#808080"/>
<rect x="343" y="119" width="1" height="1" fill="#808080"/>
<rect x="343" y="145" width="1" height="1" fill="#808080"/>
<rect x="343" y="171" width="1" height="1" fill="#808080"/>
<rect x="343" y="196" width="1" height="1" fill="#808080"/>
<rect x="343" y="222" width="1" height="1" fill="#808080"/>
<rect x="343" y="247" width="1" height="1" fill="#808080"/>
<rect x="343" y="273" width="1" height="1" fill="#808080"/>
<rect x="343" y="299" width="1" height="1" fill="#808080"/>
<rect x="343" y="324" width="1" height="1" fill="#808080"/>
<rect x="343" y="350" width="1" height="1" fill="#808080"/>
<rect x="343" y="375" width="1" height="1" fill="#808080"/>
<rect x="343" y="401" width="1" height="1" fill="#808080"/>
<rect x="343" y="427" width="1" height="1" fill="#808080"/>
<rect x="343" y="452" width="1" height="1" fill="#808080"/>
<rect x="343" y="478" width="1" height="1" fill="#808080"/>
<rect x="343" y="503" width="1" height="1" fill="#808080"/>
<rect x="343" y="529" width="1" height="1" fill="#808080"/>
<rect x="343" y="555" width="1" height="1" fill="#808080"/>
<rect x="369" y="94" width="1" height="1" fill="#808080"/>
<rect x="369" y="119" width="1" height="1" fill="#808080"/>
<rect x="369" y="145" width="1" height="1" fill="#808080"/>
<rect x="369" y="171" width="1" height="1" fill="#808080"/>
<rect x="369" y="196" width="1" height="1" fill="#808080"/>
<rect x="369" y="222" width="1" height="1" fill="#808080"/>
<rect x="369" y="247" width="1" height="1" fill="#808080"/>
<rect x="369" y="273" width="1" height="1" fill="#808080"/>
<rect x="369" y="299" width="1" height="1" fill="#808080"/>
<rect x="369" y="324" width="1" height="1" fill="#808080"/>
<rect x="369" y="350" width="1" height="1" fill="#808080"/>
<rect x="369" y="375" width="1" height="1" fill="#808080"/>
<rect x="369" y="401" width="1" height="1" fill="#808080"/>
<rect x="369" y="427" width="1" height="1" fill="#808080"/>
<rect x="369" y="452" width="1" height="1" fill="#808080"/>
<rect x="369" y="478" width="1" height="1" fill="#808080"/>
<rect x="369" y="503" width="1" height="1" fill="#808080"/>
<rect x="369" y="529" width="1" height="1" fill="#808080"/>
<rect x="369" y="555" width="1" height="1" fill="#808080"/>
<rect x="394" y="94" width="1" height="1" fill="#808080"/>
<rect x="394" y="119" width="1" height="1" fill="#808080"/>
<rect x="394" y="145" width="1" height="1" fill="#808080"/>
<rect x="394" y="171" width="1" height="1" fill="#808080"/>
<rect x="394" y="196" width="1" height="1" fill="#808080"/>
<rect x="394" y="222" width="1" height="1" fill="#808080"/>
<rect x="394" y="247" width="1" height="1" fill="#808080"/>
<rect x="394" y="273" width="1" height="1" fill="#808080"/>
<rect x="394" y="299" width="1" height="1" fill="#808080"/>
<rect x="394" y="324" width="1" height="1" fill="#808080"/>
<rect x="394" y="350" width="1" height="1" fill="#808080"/>
<rect x="394" y="375" width="1" height="1" fill="#808080"/>
<rect x="394" y="401" width="1" height="1" fill="#808080"/>
<rect x="394" y="427" width="1" height="1" fill="#808080"/>
<rect x="394" y="452" width="1" height="1" fill="#808080"/>
<rect x="394" y="478" width="1" height="1" fill="#808080"/>
<rect x="394" y="503" width="1" height="1" fill="#808080"/>
<rect x="394" y="529" width="1" height="1" fill="#808080"/>
<rect x="394" y="555" width="1" height="1" fill="#808080"/>
<rect x="420" y="94" width="1" height="1" fill="#808080"/>
<rect x="420" y="119" width="1" height="1" fill="#808080"/>
<rect x="420" y="145" width="1" height="1" fill="#808080"/>
<rect x="420" y="171" width="1" height="1" fill="#808080"/>
<rect x="420" y="196" width="1" height="1" fill="#808080"/>
<rect x="420" y="222" width="1" height="1" fill="#808080"/>
<rect x="420" y="247" width="1" height="1" fill="#808080"/>
<rect x="420" y="273" width="1" height="1" fill="#808080"/>
<rect x="420" y="299" width="1" height="1" fill="#808080"/>
<rect x="420" y="324" width="1" height="1" fill="#808080"/>
<rect x="420" y="350" width="1" height="1" fill="#808080"/>
<rect x="420" y="375" width="1" height="1" fill="#808080"/>
<rect x="420" y="401" width="1" height="1" fill="#808080"/>
<rect x="420" y="427" width="1" height="1" fill="#808080"/>
<rect x="420" y="452" width="1" height="1" fill="#808080"/>
<rect x="420" y="478" width="1" height="1" fill="#808080"/>
<rect x="420" y="503" width="1" height="1" fill="#808080"/>
<rect x="420" y="529" width="1" height="1" fill="#808080"/>
<rect x="420" y="555" width="1" height="1" fill="#808080"/>
<rect x="446" y="94" width="1" height="1" fill="#808080"/>
<rect x="446" y="119" width="1" height="1" fill="#808080"/>
<rect x="446" y="145" width="1" height="1" fill="#808080"/>
<rect x="446" y="171" width="1" height="1" fill="#808080"/>
<rect x="446" y="196" width="1" height="1" fill="#808080"/>
<rect x="446" y="222" width="1" height="1" fill="#808080"/>
<rect x="446" y="247" width="1" height="1" fill="#808080"/>
<rect x="446" y="273" width="1" height="1" fill="#808080"/>
<rect x="446" y="299" width="1" height="1" fill="#808080"/>
<rect x="446" y="324" width="1" height="1" fill="#808080"/>
<rect x="446" y="350" width="1" height="1" fill="#808080"/>
<rect x="446" y="375" width="1" height="1" fill="#808080"/>
<rect x="446" y="401" width="1" height="1" fill="#808080"/>
<rect x="446" y="427" width="1" height="1" fill="#808080"/>
<rect x="446" y="452" width="1" height="1" fill="#808080"/>
<rect x="446" y="478" width="1" height="1" fill="#808080"/>
<rect x="446" y="503" width="1" height="1" fill="#808080"/>
<rect x="446" y="529" width="1" height="1" fill="#808080"/>
<rect x="446" y="555" width="1" height="1" fill="#808080"/>
<rect x="471" y="94" width="1" height="1" fill="#808080"/>
<rect x="471" y="119" width="1" height="1" fill="#808080"/>
<rect x="471" y="145" width="1" height="1" fill="#808080"/>
<rect x="471" y="171" width="1" height="1" fill="#808080"/>
<rect x="471" y="196" width="1" height="1" fill="#808080"/>
<rect x="471" y="222" width="1" height="1" fill="#808080"/>
<rect x="471" y="247" width="1" height="1" fill="#808080"/>
<rect x="471" y="273" width="1" height="1" fill="#808080"/>
<rect x="471" y="299" width="1" height="1" fill="#808080"/>
<rect x="471" y="324" width="1" height="1" fill="#808080"/>
<rect x="471" y="350" width="1" height="1" fill="#808080"/>
<rect x="471" y="375" width="1" height="1" fill="#808080"/>
<rect x="471" y="401" width="1" height="1" fill="#808080"/>
<rect x="471" y="427" width="1" height="1" fill="#808080"/>
<rect x="471" y="452" width="1" height="1" fill="#808080"/>
<rect x="471" y="478" width="1" height="1" fill="#808080"/>
<rect x="471" y="503" width="1" height="1" fill="#808080"/>
<rect x="471" y="529" width="1" height="1" fill="#808080"/>
<rect x="471" y="555" width="1" height="1" fill="#808080"/>
<rect x="497" y="94" width="1" height="1" fill="#808080"/>
<rect x="497" y="119" width="1" height="1" fill="#808080"/>
<rect x="497" y="145" width="1" height="1" fill="#808080"/>
<rect x="497" y="171" width="1" height="1" fill="#808080"/>
<rect x="497" y="196" width="1" height="1" fill="#808080"/>
<rect x="497" y="222" width="1" height="1" fill="#808080"/>
<rect x="497" y="247" width="1" height="1" fill="#808080"/>
<rect x="497" y="273" width="1" height="1" fill="#808080"/>
<rect x="497" y="299" width="1" height="1" fill="#808080"/>
<rect x="497" y="324" width="1" height="1" fill="#808080"/>
<rect x="497" y="350" width="1" height="1" fill="#808080"/>
<rect x="497" y="375" width="1" height="1" fill="#808080"/>
<rect x="497" y="401" width="1" height="1" fill="#808080"/>
<rect x="497" y="427" width="1" height="1" fill="#808080"/>
<rect x="497" y="452" width="1" height="1" fill="#808080"/>
<rect x="497" y="478" width="1" height="1" fill="#808080"/>
<rect x="497" y="503" width="1" height="1" fill="#808080"/>
<rect x="497" y="529" width="1" height="1" fill="#808080"/>
<rect x="497" y="555" width="1" height="1" fill="#808080"/>
<rect x="522" y="94" width="1" height="1" fill="#808080"/>
<rect x="522" y="119" width="1" height="1" fill="#808080"/>
<rect x="522" y="145" width="1" height="1" fill="#808080"/>
<rect x="522" y="171" width="1" height="1" fill="#808080"/>
<rect x="522" y="196" width="1" height="1" fill="#808080"/>
<rect x="522" y="222" width="1" height="1" fill="#808080"/>
<rect x="522" y="247" width="1" height="1" fill="#808080"/>
<rect x="522" y="273" width="1" height="1" fill="#808080"/>
<rect x="522" y="299" width="1" height="1" fill="#808080"/>
<rect x="522" y="324" width="1" height="1" fill="#808080"/>
<rect x="522" y="350" width="1" height="1" fill="#808080"/>
<rect x="522" y="375" width="1" height="1" fill="#808080"/>
<rect x="522" y="401" width="1" height="1" fill="#808080"/>
<rect x="522" y="427" width="1" height="1" fill="#808080"/>
<rect x="522" y="452" width="1" height="1" fill="#808080"/>
<rect x="522" y="478" width="1" height="1" fill="#808080"/>
<rect x="522" y="503" width="1" height="1" fill="#808080"/>
<rect x="522" y="529" width="1" height="1" fill="#808080"/>
<rect x="522" y="555" width="1" height="1" fill="#808080"/>
<rect x="548" y="94" width="1" height="1" fill="#808080"/>
<rect x="548" y="119" width="1" height="1" fill="#808080"/>
<rect x="548" y="145" width="1" height="1" fill="#808080"/>
<rect x="548" y="171" width="1" height="1" fill="#808080"/>
<rect x="548" y="196" width="1" height="1" fill="#808080"/>
<rect x="548" y="222" width="1" height="1" fill="#808080"/>
<rect x="548" y="247" width="1" height="1" fill="#808080"/>
<rect x="548" y="273" width="1" height="1" fill="#808080"/>
<rect x="548" y="299" width="1" height="1" fill="#808080"/>
<rect x="548" y="324" width="1" height="1" fill="#808080"/>
<rect x="548" y="350" width="1" height="1" fill="#808080"/>
<rect x="548" y="375" width="1" height="1" fill="#808080"/>
<rect x="548" y="401" width="1" height="1" fill="#808080"/>
<rect x="548" y="427" width="1" height="1" fill="#808080"/>
<rect x="548" y="452" width="1" height="1" fill="#808080"/>
<rect x="548" y="478" width="1" height="1" fill="#808080"/>
<rect x="548" y="503" width="1" height="1" fill="#808080"/>
<rect x="548" y="529" width="1" height="1" fill="#808080"/>
<rect x="548" y="555" width="1" height="1" fill="#808080"/>
<rect x="574" y="94" width="1" height="1" fill="#808080"/>
<rect x="574" y="119" width="1" height="1" fill="#808080"/>
<rect x="574" y="145" width="1" height="1" fill="#808080"/>
<rect x="574" y="171" width="1" height="1" fill="#808080"/>
<rect x="574" y="196" width="1" height="1" fill="#808080"/>
<rect x="574" y="222" width="1" height="1" fill="#808080"/>
<rect x="574" y="247" width="1" height="1" fill="#808080"/>
<rect x="574" y="273" width="1" height="1" fill="#808080"/>
<rect x="574" y="299" width="1" height="1" fill="#808080"/>
<rect x="574" y="324" width="1" height="1" fill="#808080"/>
<rect x="574" y="350" width="1" height="1" fill="#808080"/>
<rect x="574" y="375" width="1" height="1" fill="#808080"/>
<rect x="574" y="401" width="1" height="1" fill="#808080"/>
<rect x="574" y="427" width="1" height="1" fill="#808080"/>
<rect x="574" y="452" width="1" height="1" fill="#808080"/>
<rect x="574" y="478" width="1" height="1" fill="#808080"/>
<rect x="574" y="503" width="1" height="1" fill="#808080"/>
<rect x="574" y="529" width="1" height="1" fill="#808080"/>
<rect x="574" y="555" width="1" height="1" fill="#808080"/>
<rect x="599" y="94" width="1" height="1" fill="#808080"/>
<rect x="599" y="119" width="1" height="1" fill="#808080"/>
<rect x="599" y="145" width="1" height="1" fill="#808080"/>
<rect x="599" y="171" width="1" height="1" fill="#808080"/>
<rect x="599" y="196" width="1" height="1" fill="#808080"/>
<rect x="599" y="222" width="1" height="1" fill="#808080"/>
<rect x="599" y="247" width="1" height="1" fill="#808080"/>
<rect x="599" y="273" width="1" height="1" fill="#808080"/>
<rect x="599" y="299" width="1" height="1" fill="#808080"/>
<rect x="599" y="324" width="1" height="1" fill="#808080"/>
<rect x="599" y="350" width="1" height="1" fill="#808080"/>
<rect x="599" y="375" width="1" height="1" fill="#808080"/>
<rect x="599" y="401" width="1" height="1" fill="#808080"/>
<rect x="599" y="427" width="1" height="1" fill="#808080"/>
<rect x="599" y="452" width="1" height="1" fill="#808080"/>
<rect x="599" y="478" width="1" height="1" fill="#808080"/>
<rect x="599" y="503" width="1" height="1" fill="#808080"/>
<rect x="599" y="529" width="1" height="1" fill="#808080"/>
<rect x="599" y="555" width="1" height="1" fill="#808080"/>
<rect x="625" y="94" width="1" height="1" fill="#808080"/>
<rect x="625" y="119" width="1" height="1" fill="#808080"/>
<rect x="625" y="145" width="1" height="1" fill="#808080"/>
<rect x="625" y="171" width="1" height="1" fill="#808080"/>
<rect x="625" y="196" width="1" height="1" fill="#808080"/>
<rect x="625" y="222" width="1" height="1" fill="#808080"/>
<rect x="625" y="247" width="1" height="1" fill="#808080"/>
<rect x="625" y="273" width="1" height="1" fill="#808080"/>
<rect x="625" y="299" width="1" height="1" fill="#808080"/>
<rect x="625" y="324" width="1" height="1" fill="#808080"/>
<rect x="625" y="350" width="1" height="1" fill="#808080"/>
<rect x="625" y="375" width="1" height="1" fill="#808080"/>
<rect x="625" y="401" width="1" height="1" fill="#808080"/>
<rect x="625" y="427" width="1" height="1" fill="#808080"/>
<rect x="625" y="452" width="1" height="1" fill="#808080"/>
<rect x="625" y="478" width="1" height="1" fill="#808080"/>
<rect x="625" y="503" width="1" height="1" fill="#808080"/>
<rect x="625" y="529" width="1" height="1" fill="#808080"/>
<rect x="625" y="555" width="1" height="1" fill="#808080"/>
<rect x="650" y="94" width="1" height="1" fill="#808080"/>
<rect x="650" y="119" width="1" height="1" fill="#808080"/>
<rect x="650" y="145" width="1" height="1" fill="#808080"/>
<rect x="650" y="171" width="1" height="1" fill="#808080"/>
<rect x="650" y="196" width="1" height="1" fill="#808080"/>
<rect x="650" y="222" width="1" height="1" fill="#808080"/>
<rect x="650" y="247" width="1" height="1" fill="#808080"/>
<rect x="650" y="273" width="1" height="1" fill="#808080"/>
<rect x="650" y="299" width="1" height="1" fill="#808080"/>
<rect x="650" y="324" width="1" height="1" fill="#808080"/>
<rect x="650" y="350" width="1" height="1" fill="#808080"/>
<rect x="650" y="375" width="1" height="1" fill="#808080"/>
<rect x="650" y="401" width="1" height="1" fill="#808080"/>
<rect x="650" y="427" width="1" height="1" fill="#808080"/>
<rect x="650" y="452" width="1" height="1" fill="#808080"/>
<rect x="650" y="478" width="1" height="1" fill="#808080"/>
<rect x="650" y="503" width="1" height="1" fill="#808080"/>
<rect x="650" y="529" width="1" height="1" fill="#808080"/>
<rect x="650" y="555" width="1" height="1" fill="#808080"/>
<rect x="676" y="94" width="1" height="1" fill="#808080"/>
<rect x="676" y="119" width="1" height="1" fill="#808080"/>
<rect x="676" y="145" width="1" height="1" fill="#808080"/>
<rect x="676" y="171" width="1" height="1" fill="#808080"/>
<rect x="676" y="196" width="1" height="1" fill="#808080"/>
<rect x="676" y="222" width="1" height="1" fill="#808080"/>
<rect x="676" y="247" width="1" height="1" fill="#808080"/>
<rect x="676" y="273" width="1" height="1" fill="#808080"/>
<rect x="676" y="299" width="1" height="1" fill="#808080"/>
<rect x="676" y="324" width="1" height="1" fill="#808080"/>
<rect x="676" y="350" width="1" height="1" fill="#808080"/>
<rect x="676" y="375" width="1" height="1" fill="#808080"/>
<rect x="676" y="401" width="1" height="1" fill="#808080"/>
<rect x="676" y="427" width="1" height="1" fill="#808080"/>
<rect x="676" y="452" width="1" height="1" fill="#808080"/>
<rect x="676" y="478" width="1" height="1" fill="#808080"/>
<rect x="676" y="503" width="1" height="1" fill="#808080"/>
<rect x="676" y="529" width="1" height="1" fill="#808080"/>
<rect x="676" y="555" width="1" height="1" fill="#808080"/>
<rect x="164" y="311" width="51" height="1" fill="#008000"/>
<rect x="164" y="362" width="51" height="1" fill="#008000"/>
<rect x="164" y="311" width="1" height="52" fill="#008000"/>
<rect x="214" y="311" width="1" height="52" fill="#008000"/>
<rect x="138" y="324" width="26" height="1" fill="#0000ff"/>
<rect x="138" y="350" width="26" height="1" fill="#0000ff"/>
<rect x="215" y="324" width="26" height="1" fill="#0000ff"/>
<text x="164" y="298.5" font-size="14" fill="#0000ff" text-anchor="start" letter-spacing="0.2">U8</text>
<text x="164" y="308" font-size="14" fill="#0000ff" text-anchor="start" letter-spacing="0.2">rand_r</text>
<text x="169" y="328.6" font-size="14" fill="#0000ff" text-anchor="start" letter-spacing="0.2">pdf</text>
<text x="169" y="354.6" font-size="14" fill="#0000ff" text-anchor="start" letter-spacing="0.2">hold</text>
<text x="212" y="328.6" font-size="14" fill="#0000ff" text-anchor="end" letter-spacing="0.2">z</text>
<path d="M93,324.5 L100.5,316.5 L108,324.5 L100.5,332.5 Z" fill="none" stroke="#008000" stroke-width="1"/>
<rect x="108" y="324" width="30" height="1" fill="#008000"/>
<text x="116" y="319" font-size="20" fill="#008080" text-anchor="start" stroke="#008080" stroke-width="0.25">'N'</text>
<rect x="241" y="324" width="102" height="1" fill="#008000"/>
<rect x="241" y="171" width="1" height="154" fill="#008000"/>
<rect x="241" y="171" width="281" height="1" fill="#008000"/>
<rect x="369" y="311" width="51" height="1" fill="#008000"/>
<rect x="369" y="490" width="51" height="1" fill="#008000"/>
<rect x="369" y="311" width="1" height="180" fill="#008000"/>
<rect x="419" y="311" width="1" height="180" fill="#008000"/>
<rect x="343" y="324" width="26" height="1" fill="#0000ff"/>
<rect x="343" y="350" width="26" height="1" fill="#0000ff"/>
<rect x="343" y="375" width="26" height="1" fill="#0000ff"/>
<rect x="343" y="401" width="26" height="1" fill="#0000ff"/>
<rect x="343" y="427" width="26" height="1" fill="#0000ff"/>
<rect x="343" y="452" width="26" height="1" fill="#0000ff"/>
<rect x="343" y="478" width="26" height="1" fill="#0000ff"/>
<path d="M361.5,317.5 L369.5,324.5 L362.5,331.5" fill="none" stroke="#008000" stroke-width="1"/>
<rect x="420" y="324" width="26" height="1" fill="#0000ff"/>
<rect x="446" y="324" width="52" height="1" fill="#008000"/>
<rect x="497" y="324" width="1" height="52" fill="#008000"/>
<rect x="497" y="375" width="25" height="1" fill="#008000"/>
<text x="369" y="298.5" font-size="14" fill="#0000ff" text-anchor="start" letter-spacing="0.2">U7</text>
<text x="369" y="308" font-size="14" fill="#0000ff" text-anchor="start" letter-spacing="0.2">cheby1_r</text>
<text x="374" y="328.6" font-size="14" fill="#0000ff" text-anchor="start" letter-spacing="0.2">x</text>
<text x="374" y="354.6" font-size="14" fill="#0000ff" text-anchor="start" letter-spacing="0.2">type</text>
<text x="374" y="379.6" font-size="14" fill="#0000ff" text-anchor="start" letter-spacing="0.2">fc</text>
<text x="374" y="405.6" font-size="14" fill="#0000ff" text-anchor="start" letter-spacing="0.2">sfreq</text>
<text x="374" y="431.6" font-size="14" fill="#0000ff" text-anchor="start" letter-spacing="0.2">ripple</text>
<text x="374" y="456.6" font-size="14" fill="#0000ff" text-anchor="start" letter-spacing="0.2">order</text>
<text x="374" y="482.6" font-size="14" fill="#0000ff" text-anchor="start" letter-spacing="0.2">hold</text>
<text x="417" y="328.6" font-size="14" fill="#0000ff" text-anchor="end" letter-spacing="0.2">y</text>
<path d="M272,350.5 L279.5,342.5 L287,350.5 L279.5,358.5 Z" fill="none" stroke="#008000" stroke-width="1"/>
<rect x="287" y="350" width="56" height="1" fill="#008000"/>
<text x="292" y="345" font-size="20" fill="#008080" text-anchor="start" stroke="#008080" stroke-width="0.25">"LPF"</text>
<path d="M272,375.5 L279.5,367.5 L287,375.5 L279.5,383.5 Z" fill="none" stroke="#008000" stroke-width="1"/>
<rect x="287" y="375" width="56" height="1" fill="#008000"/>
<text x="292" y="370" font-size="20" fill="#008080" text-anchor="start" stroke="#008080" stroke-width="0.25">500.0</text>
<path d="M272,401.5 L279.5,393.5 L287,401.5 L279.5,409.5 Z" fill="none" stroke="#008000" stroke-width="1"/>
<rect x="287" y="401" width="56" height="1" fill="#008000"/>
<text x="292" y="396" font-size="20" fill="#008080" text-anchor="start" stroke="#008080" stroke-width="0.25">5.0e3</text>
<path d="M272,427.5 L279.5,419.5 L287,427.5 L279.5,435.5 Z" fill="none" stroke="#008000" stroke-width="1"/>
<rect x="287" y="427" width="56" height="1" fill="#008000"/>
<text x="292" y="422" font-size="20" fill="#008080" text-anchor="start" stroke="#008080" stroke-width="0.25">1.2</text>
<path d="M272,452.5 L279.5,444.5 L287,452.5 L279.5,460.5 Z" fill="none" stroke="#008000" stroke-width="1"/>
<rect x="287" y="452" width="56" height="1" fill="#008000"/>
<text x="295.5" y="447" font-size="20" fill="#008080" text-anchor="start" stroke="#008080" stroke-width="0.25">7</text>
<rect x="548" y="158" width="77" height="1" fill="#008000"/>
<rect x="548" y="259" width="77" height="1" fill="#008000"/>
<rect x="548" y="158" width="1" height="102" fill="#008000"/>
<rect x="624" y="158" width="1" height="102" fill="#008000"/>
<rect x="522" y="171" width="26" height="1" fill="#0000ff"/>
<text x="553" y="176" font-size="14" fill="#0000ff" text-anchor="start" letter-spacing="0.2">input</text>
<rect x="522" y="196" width="26" height="1" fill="#0000ff"/>
<text x="553" y="201" font-size="14" fill="#0000ff" text-anchor="start" letter-spacing="0.2">filename</text>
<rect x="522" y="222" width="26" height="1" fill="#0000ff"/>
<text x="553" y="227" font-size="14" fill="#0000ff" text-anchor="start" letter-spacing="0.2">title</text>
<rect x="522" y="247" width="26" height="1" fill="#0000ff"/>
<text x="553" y="252" font-size="14" fill="#0000ff" text-anchor="start" letter-spacing="0.2">hold</text>
<path d="M540.5,164.5 L548.5,171.5 L541.5,178.5" fill="none" stroke="#008000" stroke-width="1"/>
<text x="548" y="145" font-size="14" fill="#0000ff" text-anchor="start" letter-spacing="0.2">U10</text>
<text x="548" y="155" font-size="14" fill="#0000ff" text-anchor="start" letter-spacing="0.2">sink_r</text>
<path d="M451,196.5 L458.5,188.5 L466,196.5 L458.5,204.5 Z" fill="none" stroke="#008000" stroke-width="1"/>
<rect x="466" y="196" width="56" height="1" fill="#008000"/>
<text x="471" y="190.5" font-size="20" fill="#008080" text-anchor="start" stroke="#008080" stroke-width="0.25">"x.sig"</text>
<rect x="548" y="363" width="77" height="1" fill="#008000"/>
<rect x="548" y="464" width="77" height="1" fill="#008000"/>
<rect x="548" y="363" width="1" height="102" fill="#008000"/>
<rect x="624" y="363" width="1" height="102" fill="#008000"/>
<rect x="522" y="375" width="26" height="1" fill="#0000ff"/>
<text x="553" y="380" font-size="14" fill="#0000ff" text-anchor="start" letter-spacing="0.2">input</text>
<rect x="522" y="401" width="26" height="1" fill="#0000ff"/>
<text x="553" y="406" font-size="14" fill="#0000ff" text-anchor="start" letter-spacing="0.2">filename</text>
<rect x="522" y="427" width="26" height="1" fill="#0000ff"/>
<text x="553" y="432" font-size="14" fill="#0000ff" text-anchor="start" letter-spacing="0.2">title</text>
<rect x="522" y="452" width="26" height="1" fill="#0000ff"/>
<text x="553" y="457" font-size="14" fill="#0000ff" text-anchor="start" letter-spacing="0.2">hold</text>
<path d="M540.5,368.5 L548.5,375.5 L541.5,382.5" fill="none" stroke="#008000" stroke-width="1"/>
<text x="548" y="350" font-size="14" fill="#0000ff" text-anchor="start" letter-spacing="0.2">U12</text>
<text x="548" y="360" font-size="14" fill="#0000ff" text-anchor="start" letter-spacing="0.2">sink_r</text>
<path d="M451,401.5 L458.5,393.5 L466,401.5 L458.5,409.5 Z" fill="none" stroke="#008000" stroke-width="1"/>
<rect x="466" y="401" width="56" height="1" fill="#008000"/>
<text x="458.5" y="395.5" font-size="20" fill="#008080" text-anchor="start" stroke="#008080" stroke-width="0.25">"y.sig"</text>
<circle cx="241.5" cy="324.5" r="5" fill="#0000ff"/></g></g></svg>
<div class="a" style="left:5px;top:80px;width:29px;height:1px;background:#d6d8e0;"></div>
<div class="a" style="left:8px;top:87px;width:23px;height:23px;background:#9aa0a8;"></div>
<div class="a" style="left:8px;top:87px;width:23px;height:1px;background:#d6d8e0;"></div>
<div class="a" style="left:8px;top:87px;width:1px;height:23px;background:#d6d8e0;"></div>
<div class="a" style="left:8px;top:109px;width:23px;height:1px;background:#000;"></div>
<div class="a" style="left:30px;top:87px;width:1px;height:23px;background:#000;"></div>
<svg style="left:8px;top:87px;" width="23" height="23" viewBox="0 0 23 23"><path d="M4,4 Q13,6 16,16" fill="none" stroke="#000" stroke-width="1" /><rect x="17" y="17" width="1" height="1" fill="#000"/></svg>
<div class="a" style="left:8px;top:110px;width:23px;height:23px;background:#9aa0a8;"></div>
<div class="a" style="left:8px;top:110px;width:23px;height:1px;background:#d6d8e0;"></div>
<div class="a" style="left:8px;top:110px;width:1px;height:23px;background:#d6d8e0;"></div>
<div class="a" style="left:8px;top:132px;width:23px;height:1px;background:#000;"></div>
<div class="a" style="left:30px;top:110px;width:1px;height:23px;background:#000;"></div>
<svg style="left:8px;top:110px;" width="23" height="23" viewBox="0 0 23 23"><rect x="4" y="5" width="13" height="13" fill="#000"/><rect x="5" y="6" width="11" height="11" fill="#9aa0a8"/></svg>
<div class="a" style="left:8px;top:133px;width:23px;height:23px;background:#9aa0a8;"></div>
<div class="a" style="left:8px;top:133px;width:23px;height:1px;background:#d6d8e0;"></div>
<div class="a" style="left:8px;top:133px;width:1px;height:23px;background:#d6d8e0;"></div>
<div class="a" style="left:8px;top:155px;width:23px;height:1px;background:#000;"></div>
<div class="a" style="left:30px;top:133px;width:1px;height:23px;background:#000;"></div>
<svg style="left:8px;top:133px;" width="23" height="23" viewBox="0 0 23 23"><path d="M10.5,10.5 m-7,0 a7,7 0 1,0 14,0 a7,7 0 1,0 -14,0" fill="none" stroke="#000" stroke-width="1" /></svg>
<div class="a" style="left:8px;top:156px;width:23px;height:23px;background:#9aa0a8;"></div>
<div class="a" style="left:8px;top:156px;width:23px;height:1px;background:#d6d8e0;"></div>
<div class="a" style="left:8px;top:156px;width:1px;height:23px;background:#d6d8e0;"></div>
<div class="a" style="left:8px;top:178px;width:23px;height:1px;background:#000;"></div>
<div class="a" style="left:30px;top:156px;width:1px;height:23px;background:#000;"></div>
<svg style="left:8px;top:156px;" width="23" height="23" viewBox="0 0 23 23"><path d="M15.5,6.5 H8.5 L4.5,10.5 V16.5 H15.5 M15.5,6.5 L14.5,9.5 H18.5" fill="none" stroke="#000" stroke-width="1" /></svg>
<div class="a" style="left:8px;top:179px;width:23px;height:23px;background:#9aa0a8;"></div>
<div class="a" style="left:8px;top:179px;width:23px;height:1px;background:#d6d8e0;"></div>
<div class="a" style="left:8px;top:179px;width:1px;height:23px;background:#d6d8e0;"></div>
<div class="a" style="left:8px;top:201px;width:23px;height:1px;background:#000;"></div>
<div class="a" style="left:30px;top:179px;width:1px;height:23px;background:#000;"></div>
<svg style="left:8px;top:179px;" width="23" height="23" viewBox="0 0 23 23"><text x="3" y="15" font-size="11" font-weight="bold" fill="#ff0000" font-family="Liberation Sans">A</text><text x="12" y="13" font-size="11" font-weight="bold" fill="#008000" font-family="Liberation Sans">B</text><text x="7" y="20" font-size="11" font-weight="bold" fill="#0000ff" font-family="Liberation Sans">C</text></svg>
<div class="a" style="left:8px;top:202px;width:23px;height:23px;background:#9aa0a8;"></div>
<div class="a" style="left:8px;top:202px;width:23px;height:1px;background:#d6d8e0;"></div>
<div class="a" style="left:8px;top:202px;width:1px;height:23px;background:#d6d8e0;"></div>
<div class="a" style="left:8px;top:224px;width:23px;height:1px;background:#000;"></div>
<div class="a" style="left:30px;top:202px;width:1px;height:23px;background:#000;"></div>
<svg style="left:8px;top:202px;" width="23" height="23" viewBox="0 0 23 23"><rect x="3" y="5" width="16" height="15" fill="#000"/><rect x="4" y="6" width="14" height="13" fill="#9aa0a8"/><text x="5" y="11.5" font-size="7" fill="#000" font-family="Liberation Sans">A</text><rect x="10" y="7" width="6" height="1" fill="#000"/><rect x="10" y="9" width="6" height="1" fill="#000"/><rect x="6" y="11" width="10" height="1" fill="#000"/><rect x="6" y="13" width="10" height="1" fill="#000"/><rect x="6" y="15" width="10" height="1" fill="#000"/><rect x="6" y="17" width="10" height="1" fill="#000"/></svg>
<div class="a" style="left:8px;top:225px;width:23px;height:23px;background:#9aa0a8;"></div>
<div class="a" style="left:8px;top:225px;width:23px;height:1px;background:#d6d8e0;"></div>
<div class="a" style="left:8px;top:225px;width:1px;height:23px;background:#d6d8e0;"></div>
<div class="a" style="left:8px;top:247px;width:23px;height:1px;background:#000;"></div>
<div class="a" style="left:30px;top:225px;width:1px;height:23px;background:#000;"></div>
<svg style="left:8px;top:225px;" width="23" height="23" viewBox="0 0 23 23"><rect x="3" y="5" width="17" height="16" fill="#0000ff"/><rect x="3" y="14" width="17" height="7" fill="#808000"/><rect x="3" y="20" width="17" height="1" fill="#000"/><path d="M16,9 m-2,0 a2,2 0 1,0 4,0 a2,2 0 1,0 -4,0" fill="#f0f000" stroke="none" stroke-width="1" /><rect x="7" y="8" width="2" height="10" fill="#00a000"/><rect x="5" y="11" width="1" height="3" fill="#00a000"/><rect x="10" y="11" width="1" height="3" fill="#00a000"/><rect x="6" y="13" width="1" height="1" fill="#00a000"/><rect x="9" y="13" width="1" height="1" fill="#00a000"/><path d="M4,20 L7,17 H9 V20 Z" fill="#000" stroke="none" stroke-width="1" /><rect x="11" y="16" width="4" height="2" fill="#000"/><rect x="14" y="16" width="4" height="1" fill="#000"/><rect x="12" y="17" width="2" height="1" fill="#e0e0e0"/></svg>
<div class="a" style="left:5px;top:253px;width:29px;height:1px;background:#5c6270;"></div>
<div class="a" style="left:5px;top:254px;width:29px;height:1px;background:#d6d8e0;"></div>
<div class="a" style="left:701px;top:81px;width:13px;height:486px;background:#cdcfd7;"></div>
<div class="a" style="left:701px;top:81px;width:13px;height:13px;background:#9aa0a8;"></div>
<div class="a" style="left:702px;top:82px;width:11px;height:1px;background:#d6d8e0;"></div>
<div class="a" style="left:702px;top:82px;width:1px;height:11px;background:#d6d8e0;"></div>
<div class="a" style="left:702px;top:92px;width:11px;height:1px;background:#5c6270;"></div>
<div class="a" style="left:712px;top:82px;width:1px;height:11px;background:#5c6270;"></div>
<div class="a" style="left:701px;top:93px;width:13px;height:1px;background:#000;"></div>
<div class="a" style="left:713px;top:81px;width:1px;height:13px;background:#000;"></div>
<svg style="left:701px;top:81px;" width="13" height="13" viewBox="0 0 13 13"><path d="M3.5,7.5 H9.5 L6.5,4 Z" fill="#000" stroke="none" stroke-width="1" /></svg>
<div class="a" style="left:701px;top:125px;width:13px;height:13px;background:#9aa0a8;"></div>
<div class="a" style="left:702px;top:126px;width:11px;height:1px;background:#d6d8e0;"></div>
<div class="a" style="left:702px;top:126px;width:1px;height:11px;background:#d6d8e0;"></div>
<div class="a" style="left:702px;top:136px;width:11px;height:1px;background:#5c6270;"></div>
<div class="a" style="left:712px;top:126px;width:1px;height:11px;background:#5c6270;"></div>
<div class="a" style="left:701px;top:137px;width:13px;height:1px;background:#000;"></div>
<div class="a" style="left:713px;top:125px;width:1px;height:13px;background:#000;"></div>
<div class="a" style="left:701px;top:554px;width:13px;height:13px;background:#9aa0a8;"></div>
<div class="a" style="left:702px;top:555px;width:11px;height:1px;background:#d6d8e0;"></div>
<div class="a" style="left:702px;top:555px;width:1px;height:11px;background:#d6d8e0;"></div>
<div class="a" style="left:702px;top:565px;width:11px;height:1px;background:#5c6270;"></div>
<div class="a" style="left:712px;top:555px;width:1px;height:11px;background:#5c6270;"></div>
<div class="a" style="left:701px;top:566px;width:13px;height:1px;background:#000;"></div>
<div class="a" style="left:713px;top:554px;width:1px;height:13px;background:#000;"></div>
<svg style="left:701px;top:554px;" width="13" height="13" viewBox="0 0 13 13"><path d="M3.5,5 H9.5 L6.5,8.5 Z" fill="#000" stroke="none" stroke-width="1" /></svg>
<div class="a" style="left:36px;top:567px;width:665px;height:13px;background:#cdcfd7;"></div>
<div class="a" style="left:36px;top:567px;width:13px;height:13px;background:#9aa0a8;"></div>
<div class="a" style="left:37px;top:568px;width:11px;height:1px;background:#d6d8e0;"></div>
<div class="a" style="left:37px;top:568px;width:1px;height:11px;background:#d6d8e0;"></div>
<div class="a" style="left:37px;top:578px;width:11px;height:1px;background:#5c6270;"></div>
<div class="a" style="left:47px;top:568px;width:1px;height:11px;background:#5c6270;"></div>
<div class="a" style="left:36px;top:579px;width:13px;height:1px;background:#000;"></div>
<div class="a" style="left:48px;top:567px;width:1px;height:13px;background:#000;"></div>
<svg style="left:36px;top:567px;" width="13" height="13" viewBox="0 0 13 13"><path d="M7.5,3.5 V9.5 L4,6.5 Z" fill="#000" stroke="none" stroke-width="1" /></svg>
<div class="a" style="left:155px;top:567px;width:13px;height:13px;background:#9aa0a8;"></div>
<div class="a" style="left:156px;top:568px;width:11px;height:1px;background:#d6d8e0;"></div>
<div class="a" style="left:156px;top:568px;width:1px;height:11px;background:#d6d8e0;"></div>
<div class="a" style="left:156px;top:578px;width:11px;height:1px;background:#5c6270;"></div>
<div class="a" style="left:166px;top:568px;width:1px;height:11px;background:#5c6270;"></div>
<div class="a" style="left:155px;top:579px;width:13px;height:1px;background:#000;"></div>
<div class="a" style="left:167px;top:567px;width:1px;height:13px;background:#000;"></div>
<div class="a" style="left:688px;top:567px;width:13px;height:13px;background:#9aa0a8;"></div>
<div class="a" style="left:689px;top:568px;width:11px;height:1px;background:#d6d8e0;"></div>
<div class="a" style="left:689px;top:568px;width:1px;height:11px;background:#d6d8e0;"></div>
<div class="a" style="left:689px;top:578px;width:11px;height:1px;background:#5c6270;"></div>
<div class="a" style="left:699px;top:568px;width:1px;height:11px;background:#5c6270;"></div>
<div class="a" style="left:688px;top:579px;width:13px;height:1px;background:#000;"></div>
<div class="a" style="left:700px;top:567px;width:1px;height:13px;background:#000;"></div>
<svg style="left:688px;top:567px;" width="13" height="13" viewBox="0 0 13 13"><path d="M5,3.5 V9.5 L8.5,6.5 Z" fill="#000" stroke="none" stroke-width="1" /></svg>
<div class="a" style="left:5px;top:581px;width:711px;height:1px;background:#d6d8e0;"></div>
<div class="a" style="left:5px;top:584px;width:86px;height:1px;background:#5c6270;"></div>
<div class="a" style="left:5px;top:584px;width:1px;height:16px;background:#5c6270;"></div>
<div class="a" style="left:5px;top:599px;width:86px;height:1px;background:#d6d8e0;"></div>
<div class="a" style="left:90px;top:584px;width:1px;height:16px;background:#d6d8e0;"></div>
<div class="a" style="left:93px;top:584px;width:425px;height:1px;background:#5c6270;"></div>
<div class="a" style="left:93px;top:584px;width:1px;height:16px;background:#5c6270;"></div>
<div class="a" style="left:93px;top:599px;width:425px;height:1px;background:#d6d8e0;"></div>
<div class="a" style="left:517px;top:584px;width:1px;height:16px;background:#d6d8e0;"></div>
<div class="a" style="left:520px;top:584px;width:167px;height:1px;background:#5c6270;"></div>
<div class="a" style="left:520px;top:584px;width:1px;height:16px;background:#5c6270;"></div>
<div class="a" style="left:520px;top:599px;width:167px;height:1px;background:#d6d8e0;"></div>
<div class="a" style="left:686px;top:584px;width:1px;height:16px;background:#d6d8e0;"></div>
<div class="t" style="left:14.7px;top:586.14px;font-size:12px;color:#000;font-weight:normal;font-style:normal;transform:scaleX(0.735);transform-origin:0 0">2.69,</div>
<div class="t" style="left:38.1px;top:586.14px;font-size:12px;color:#000;font-weight:normal;font-style:normal;transform:scaleX(0.735);transform-origin:0 0">1.93</div>
<div class="t" style="left:97.5px;top:586.14px;font-size:12px;color:#000;font-weight:normal;font-style:normal;transform:scaleX(0.735);transform-origin:0 0">Schematic saved.</div>
<div class="t" style="left:524.7px;top:586.14px;font-size:12px;color:#000;font-weight:normal;font-style:normal;transform:scaleX(0.735);transform-origin:0 0">Cmd:</div>
<svg style="left:702px;top:586px;" width="14" height="14" viewBox="0 0 14 14"><path d="M13,1 L1,13 M13,5 L5,13 M13,9 L9,13" fill="none" stroke="#d6d8e0" stroke-width="1.2" /><path d="M13,2.4 L2.4,13 M13,6.4 L6.4,13 M13,10.4 L10.4,13" fill="none" stroke="#5c6270" stroke-width="1.2" /></svg>
</div></body></html>
